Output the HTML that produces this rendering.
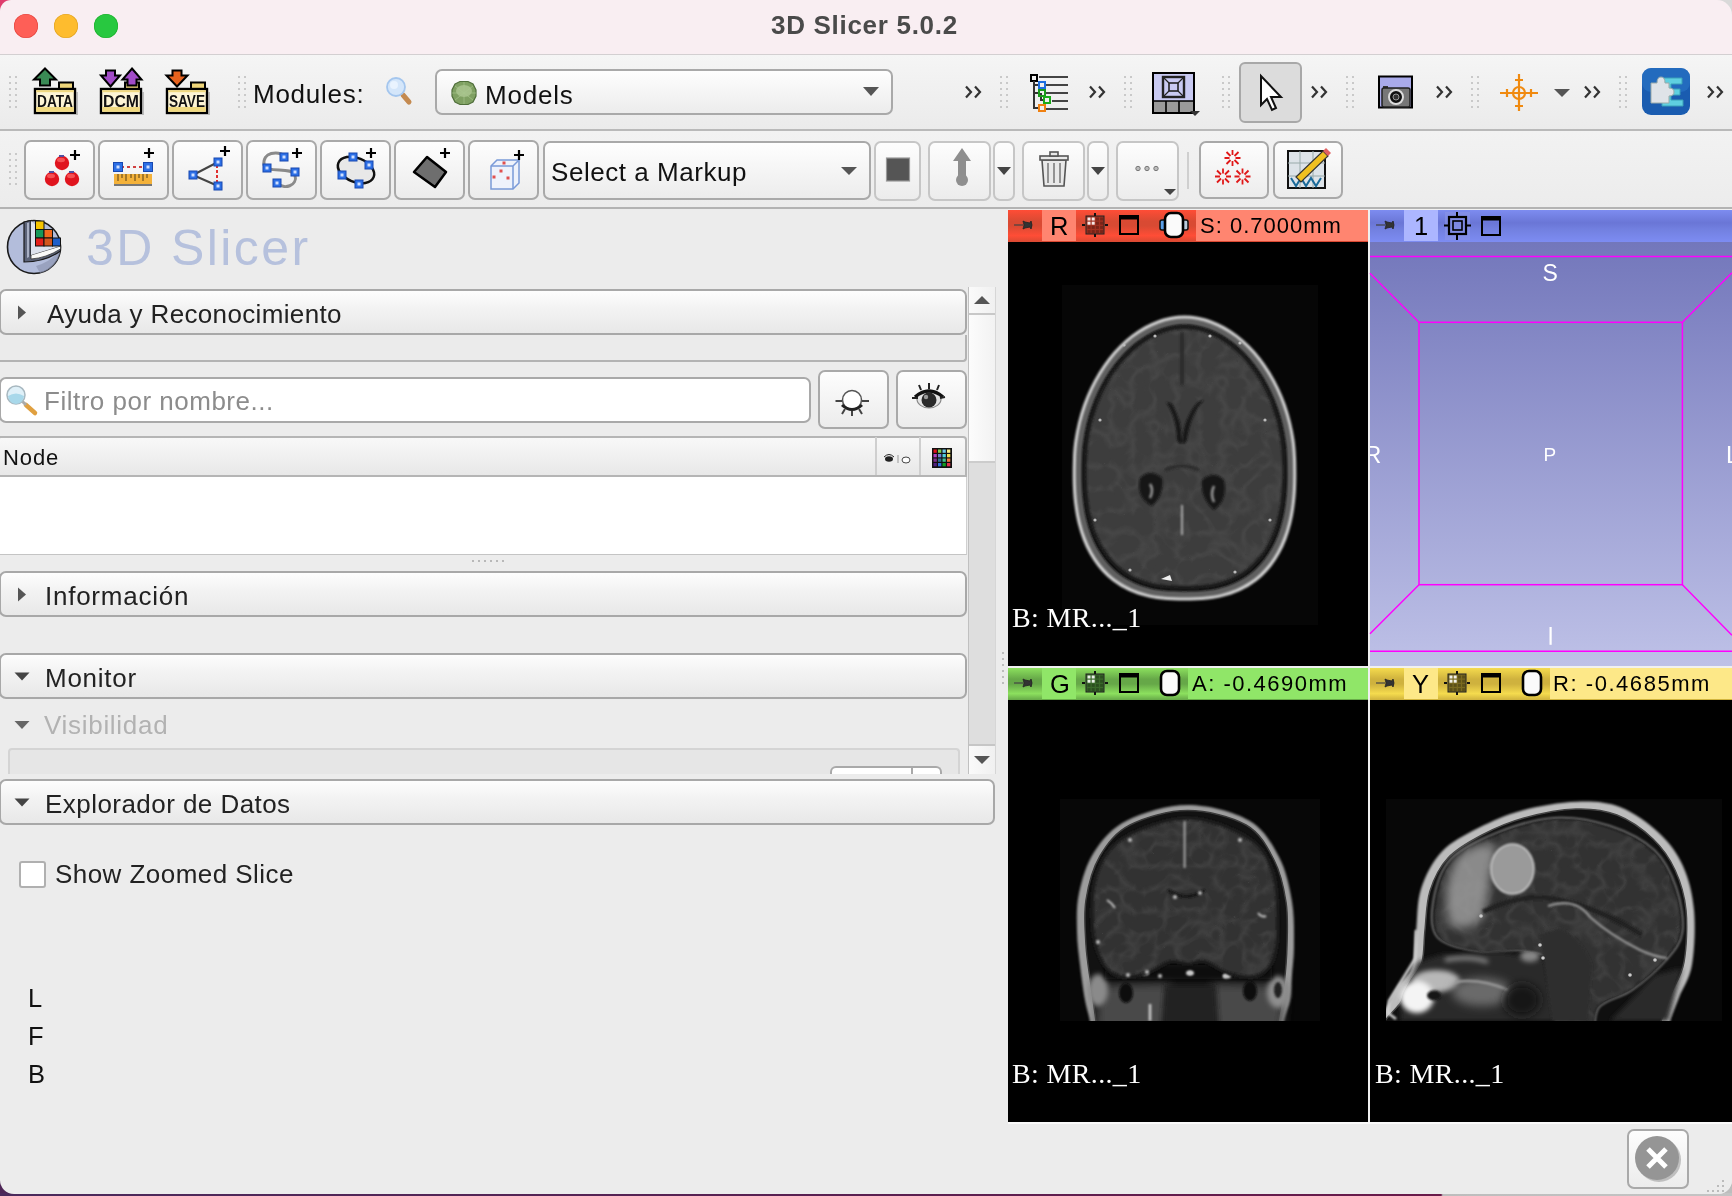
<!DOCTYPE html><html><head><meta charset="utf-8"><style>
*{margin:0;padding:0;box-sizing:border-box}
html,body{width:1732px;height:1196px;overflow:hidden;background:#5b1d48}
body{font-family:"Liberation Sans",sans-serif;position:relative}
.a{position:absolute}
.tx{position:absolute;line-height:1;white-space:nowrap;will-change:transform}

</style></head><body>
<div class="a" style="left:0;top:0;width:1732px;height:1196px;background:#4d2656"></div>
<div class="a" style="left:1442px;top:1100px;width:290px;height:96px;background:#bdbdbd"></div>
<div class="a" style="left:0;top:1193px;width:1732px;height:3px;background:linear-gradient(90deg,#4a2a5c 0%,#5a1f50 50%,#6a1a4a 83.2%,#bdbdbd 83.3%,#c4c4c4 100%)"></div>
<div id="win" class="a" style="left:0;top:0;width:1732px;height:1194px;background:#ececec;border-radius:12px 12px 14px 14px;overflow:hidden"></div>
<div class="a" style="left:1712px;top:0;width:20px;height:20px;background:#d9d9d9"></div>
<div class="a" style="left:0;top:0;width:20px;height:20px;background:#df3d6d"></div>
<div class="a" style="left:0;top:0;width:1732px;height:55px;background:#f9eef2;border-radius:11px 15px 0 0;border-bottom:1px solid #d3cfd1"></div>
<div class="a" style="left:14px;top:14px;width:24px;height:24px;border-radius:50%;background:#fe5f57;box-shadow:inset 0 0 0 0.6px #e0443e"></div>
<div class="a" style="left:54px;top:14px;width:24px;height:24px;border-radius:50%;background:#febc2e;box-shadow:inset 0 0 0 0.6px #dea123"></div>
<div class="a" style="left:94px;top:14px;width:24px;height:24px;border-radius:50%;background:#28c840;box-shadow:inset 0 0 0 0.6px #1dad2b"></div>
<div class="tx" style="left:771.0px;top:12.0px;font-size:26px;color:#4a4a4a;font-weight:700;letter-spacing:0.7px;font-family:'Liberation Sans';">3D Slicer 5.0.2</div>
<div class="a" style="left:0px;top:55px;width:1732px;height:74px;background:linear-gradient(#f5f5f5,#ebebeb)"></div>
<div class="a" style="left:0px;top:129px;width:1732px;height:2px;background:#b9b9b9"></div>
<div class="a" style="left:0px;top:131px;width:1732px;height:76px;background:linear-gradient(#f2f2f2,#ececec)"></div>
<div class="a" style="left:0px;top:207px;width:1732px;height:2px;background:#b3b3b3"></div>
<div class="tx" style="left:252.5px;top:80.6px;font-size:26px;color:#111;font-weight:400;letter-spacing:0.75px;font-family:'Liberation Sans';">Modules:</div>
<div class="a" style="left:435px;top:69px;width:458px;height:46px;border:2px solid #a9a9a9;border-radius:7px;background:linear-gradient(#fefefe,#ececec)"></div>
<div class="tx" style="left:485.0px;top:82.0px;font-size:26px;color:#111;font-weight:400;letter-spacing:0.8px;font-family:'Liberation Sans';">Models</div>
<div class="a" style="left:1239px;top:62px;width:63px;height:61px;border:2px solid #a8a8a8;border-radius:6px;background:#dcdcdc"></div>
<div class="a" style="left:24px;top:140px;width:71px;height:60px;border:2px solid #a9a9a9;border-radius:7px;background:linear-gradient(#fdfdfd,#ececec)"></div>
<div class="a" style="left:98px;top:140px;width:71px;height:60px;border:2px solid #a9a9a9;border-radius:7px;background:linear-gradient(#fdfdfd,#ececec)"></div>
<div class="a" style="left:172px;top:140px;width:71px;height:60px;border:2px solid #a9a9a9;border-radius:7px;background:linear-gradient(#fdfdfd,#ececec)"></div>
<div class="a" style="left:246px;top:140px;width:71px;height:60px;border:2px solid #a9a9a9;border-radius:7px;background:linear-gradient(#fdfdfd,#ececec)"></div>
<div class="a" style="left:320px;top:140px;width:71px;height:60px;border:2px solid #a9a9a9;border-radius:7px;background:linear-gradient(#fdfdfd,#ececec)"></div>
<div class="a" style="left:394px;top:140px;width:71px;height:60px;border:2px solid #a9a9a9;border-radius:7px;background:linear-gradient(#fdfdfd,#ececec)"></div>
<div class="a" style="left:468px;top:140px;width:71px;height:60px;border:2px solid #a9a9a9;border-radius:7px;background:linear-gradient(#fdfdfd,#ececec)"></div>
<div class="a" style="left:543px;top:141px;width:328px;height:59px;border:2px solid #a9a9a9;border-radius:7px;background:linear-gradient(#fefefe,#ececec)"></div>
<div class="tx" style="left:551.0px;top:159.3px;font-size:26px;color:#111;font-weight:400;letter-spacing:0.55px;font-family:'Liberation Sans';">Select a Markup</div>
<div class="a" style="left:874px;top:141px;width:47px;height:60px;border:2px solid #c6c6c6;border-radius:7px;background:linear-gradient(#fdfdfd,#ececec)"></div>
<div class="a" style="left:928px;top:141px;width:63px;height:60px;border:2px solid #c6c6c6;border-radius:7px;background:linear-gradient(#fdfdfd,#ececec)"></div>
<div class="a" style="left:993px;top:141px;width:22px;height:60px;border:2px solid #c6c6c6;border-radius:7px;background:linear-gradient(#fdfdfd,#ececec)"></div>
<div class="a" style="left:1022px;top:141px;width:63px;height:60px;border:2px solid #c6c6c6;border-radius:7px;background:linear-gradient(#fdfdfd,#ececec)"></div>
<div class="a" style="left:1087px;top:141px;width:22px;height:60px;border:2px solid #c6c6c6;border-radius:7px;background:linear-gradient(#fdfdfd,#ececec)"></div>
<div class="a" style="left:1116px;top:141px;width:63px;height:60px;border:2px solid #c6c6c6;border-radius:7px;background:linear-gradient(#fdfdfd,#ececec)"></div>
<div class="a" style="left:1187px;top:152px;width:2px;height:37px;background:#cfcfcf"></div>
<div class="a" style="left:1199px;top:141px;width:70px;height:58px;border:2px solid #a9a9a9;border-radius:7px;background:linear-gradient(#fdfdfd,#ececec)"></div>
<div class="a" style="left:1273px;top:141px;width:70px;height:58px;border:2px solid #a9a9a9;border-radius:7px;background:linear-gradient(#fdfdfd,#ececec)"></div>
<div class="tx" style="left:86.0px;top:222.7px;font-size:50px;color:#b6c1dd;font-weight:400;letter-spacing:2.4px;font-family:'Liberation Sans';">3D Slicer</div>
<div class="a" style="left:-1px;top:289px;width:968px;height:46px;border:2px solid #a8a8a8;border-radius:7px;background:linear-gradient(#fdfdfd,#f3f3f3 40%,#e8e8e8)"></div>
<div class="tx" style="left:46.5px;top:300.5px;font-size:26px;color:#222;font-weight:400;letter-spacing:0.35px;font-family:'Liberation Sans';">Ayuda y Reconocimiento</div>
<div class="a" style="left:-4px;top:335px;width:971px;height:27px;border:2px solid #b3b3b3;border-top:none;border-radius:0 0 4px 4px;background:#ebebeb"></div>
<div class="a" style="left:-1px;top:377px;width:812px;height:46px;border:2px solid #a9a9a9;border-radius:7px;background:#fff"></div>
<div class="tx" style="left:44.0px;top:388.0px;font-size:26px;color:#8c8c8c;font-weight:400;letter-spacing:0.5px;font-family:'Liberation Sans';">Filtro por nombre...</div>
<div class="a" style="left:818px;top:370px;width:71px;height:59px;border:2px solid #a9a9a9;border-radius:7px;background:linear-gradient(#fdfdfd,#ececec)"></div>
<div class="a" style="left:896px;top:370px;width:71px;height:59px;border:2px solid #a9a9a9;border-radius:7px;background:linear-gradient(#fdfdfd,#ececec)"></div>
<div class="a" style="left:-3px;top:436px;width:970px;height:41px;border:2px solid #b5b5b5;border-radius:4px 4px 0 0;background:linear-gradient(#f8f8f8,#e8e8e8)"></div>
<div class="a" style="left:875px;top:437px;width:2px;height:38px;background:#cfcfcf"></div>
<div class="a" style="left:919px;top:437px;width:2px;height:38px;background:#cfcfcf"></div>
<div class="tx" style="left:3.2px;top:447.0px;font-size:22px;color:#111;font-weight:400;letter-spacing:0.9px;font-family:'Liberation Sans';">Node</div>
<div class="a" style="left:-2px;top:477px;width:969px;height:78px;background:#fff;border-bottom:1px solid #c4c4c4;border-right:1px solid #d0d0d0"></div>
<div class="a" style="left:-1px;top:571px;width:968px;height:46px;border:2px solid #a8a8a8;border-radius:7px;background:linear-gradient(#fdfdfd,#f3f3f3 40%,#e8e8e8)"></div>
<div class="tx" style="left:44.8px;top:582.5px;font-size:26px;color:#222;font-weight:400;letter-spacing:0.75px;font-family:'Liberation Sans';">Información</div>
<div class="a" style="left:-1px;top:653px;width:968px;height:46px;border:2px solid #a8a8a8;border-radius:7px;background:linear-gradient(#fdfdfd,#f3f3f3 40%,#e8e8e8)"></div>
<div class="tx" style="left:44.8px;top:664.5px;font-size:26px;color:#222;font-weight:400;letter-spacing:0.75px;font-family:'Liberation Sans';">Monitor</div>
<div class="tx" style="left:44.0px;top:712.2px;font-size:26px;color:#b2b2b2;font-weight:400;letter-spacing:0.7px;font-family:'Liberation Sans';">Visibilidad</div>
<div class="a" style="left:8px;top:748px;width:952px;height:26px;border:2px solid #d4d4d4;border-bottom:none;border-radius:4px 4px 0 0;background:#e6e6e6"></div>
<div class="a" style="left:830px;top:766px;width:112px;height:8px;border:2px solid #a9a9a9;border-bottom:none;border-radius:6px 6px 0 0;background:#fff"></div>
<div class="a" style="left:911px;top:767px;width:2px;height:7px;background:#a9a9a9"></div>
<div class="a" style="left:968px;top:287px;width:28px;height:487px;background:#ececec;border-left:1px solid #c0c0c0;border-right:1px solid #d6d6d6"></div>
<div class="a" style="left:969px;top:287px;width:26px;height:27px;background:linear-gradient(90deg,#fafafa,#f0f0f0)"></div>
<div class="a" style="left:969px;top:313px;width:26px;height:2px;background:#c8c8c8"></div>
<div class="a" style="left:969px;top:315px;width:26px;height:147px;background:linear-gradient(90deg,#fcfcfc,#f2f2f2)"></div>
<div class="a" style="left:969px;top:461px;width:26px;height:285px;background:#dedede;border-top:2px solid #cccccc;border-bottom:2px solid #c6c6c6"></div>
<div class="a" style="left:969px;top:746px;width:26px;height:28px;background:linear-gradient(90deg,#fafafa,#f0f0f0)"></div>
<div class="a" style="left:-1px;top:779px;width:996px;height:46px;border:2px solid #a8a8a8;border-radius:7px;background:linear-gradient(#fdfdfd,#f3f3f3 40%,#e8e8e8)"></div>
<div class="tx" style="left:44.8px;top:790.5px;font-size:26px;color:#222;font-weight:400;letter-spacing:0.45px;font-family:'Liberation Sans';">Explorador de Datos</div>
<div class="a" style="left:18.5px;top:860.5px;width:27px;height:27px;border:2px solid #b0b0b0;border-radius:3px;background:#fff"></div>
<div class="tx" style="left:55.2px;top:861.2px;font-size:26px;color:#222;font-weight:400;letter-spacing:0.45px;font-family:'Liberation Sans';">Show Zoomed Slice</div>
<div class="tx" style="left:28.0px;top:986.4px;font-size:25.5px;color:#111;font-weight:400;letter-spacing:0px;font-family:'Liberation Sans';">L</div>
<div class="tx" style="left:28.0px;top:1023.9px;font-size:25.5px;color:#111;font-weight:400;letter-spacing:0px;font-family:'Liberation Sans';">F</div>
<div class="tx" style="left:28.0px;top:1062.0px;font-size:25.5px;color:#111;font-weight:400;letter-spacing:0px;font-family:'Liberation Sans';">B</div>
<div class="a" style="left:996px;top:209px;width:12px;height:985px;background:#ececec"></div>
<div class="a" style="left:1008px;top:209px;width:724px;height:915px;background:#f0f0f0"></div>
<div class="a" style="left:1008px;top:210px;width:360px;height:32px;background:linear-gradient(#ff4d36 0%,#d94a33 35%,#d94a33 50%,#ff4d36 80%,#d94a33 100%)"></div>
<div class="a" style="left:1042px;top:210px;width:34px;height:31px;background:#ff8570"></div>
<div class="a" style="left:1196px;top:210px;width:172px;height:31px;background:#ff8570"></div>
<div class="tx" style="left:1050.2px;top:214.4px;font-size:25.5px;color:#000;font-weight:400;letter-spacing:0px;font-family:'Liberation Sans';">R</div>
<div class="tx" style="left:1199.7px;top:214.5px;font-size:22px;color:#000;font-weight:400;letter-spacing:1.0px;font-family:'Liberation Sans';">S: 0.7000mm</div>
<div class="a" style="left:1370px;top:210px;width:362px;height:32px;background:linear-gradient(#7d8cf0 0%,#6a76d6 40%,#7280e0 60%,#7d8cf2 100%)"></div>
<div class="a" style="left:1404px;top:210px;width:34px;height:31px;background:#acb6ff"></div>
<div class="a" style="left:1445px;top:212px;width:25px;height:28px;background:#8a94e8;opacity:0.6"></div>
<div class="tx" style="left:1414.0px;top:214.4px;font-size:25.5px;color:#000;font-weight:400;letter-spacing:0px;font-family:'Liberation Sans';">1</div>
<div class="a" style="left:1008px;top:668px;width:360px;height:32px;background:linear-gradient(#8ce05e 0%,#66a848 35%,#66a848 50%,#8ce05e 80%,#66a848 100%)"></div>
<div class="a" style="left:1042px;top:668px;width:34px;height:31px;background:#90e668"></div>
<div class="a" style="left:1188px;top:668px;width:180px;height:31px;background:#90e668"></div>
<div class="tx" style="left:1050.2px;top:672.4px;font-size:25.5px;color:#000;font-weight:400;letter-spacing:0px;font-family:'Liberation Sans';">G</div>
<div class="tx" style="left:1191.8px;top:672.9px;font-size:22px;color:#000;font-weight:400;letter-spacing:1.5px;font-family:'Liberation Sans';">A: -0.4690mm</div>
<div class="a" style="left:1370px;top:668px;width:362px;height:32px;background:linear-gradient(#f5db4e 0%,#cfb23e 35%,#cfb23e 50%,#f5db4e 80%,#cfb23e 100%)"></div>
<div class="a" style="left:1404px;top:668px;width:34px;height:31px;background:#fde888"></div>
<div class="a" style="left:1550px;top:668px;width:182px;height:31px;background:#fde888"></div>
<div class="tx" style="left:1412.2px;top:672.4px;font-size:25.5px;color:#000;font-weight:400;letter-spacing:0px;font-family:'Liberation Sans';">Y</div>
<div class="tx" style="left:1552.5px;top:672.9px;font-size:22px;color:#000;font-weight:400;letter-spacing:1.55px;font-family:'Liberation Sans';">R: -0.4685mm</div>
<div class="a" style="left:1008px;top:242px;width:360px;height:424px;background:#000"></div>
<div class="a" style="left:1008px;top:700px;width:360px;height:422px;background:#000"></div>
<div class="a" style="left:1370px;top:700px;width:362px;height:422px;background:#000"></div>
<div class="a" style="left:1370px;top:242px;width:362px;height:424px;background:linear-gradient(#7377bb,#bec1e7)"></div>
<div class="a" style="left:1008px;top:1122px;width:724px;height:2px;background:#fafafa"></div>
<div class="a" style="left:1008px;top:1124px;width:724px;height:70px;background:#ececec;border-bottom-right-radius:14px"></div>
<div class="a" style="left:1062px;top:285px;width:256px;height:340px;background:#060606"></div>
<div class="a" style="left:1060px;top:799px;width:260px;height:222px;background:#070707"></div>
<div class="a" style="left:1386px;top:799px;width:336px;height:222px;background:#070707"></div>
<div class="a" style="left:1627px;top:1129px;width:62px;height:60px;border:2px solid #a9a9a9;border-radius:7px;background:linear-gradient(#fdfdfd,#ececec)"></div>
<svg class="a" style="left:0;top:0" width="1732" height="1196" viewBox="0 0 1732 1196">
<defs><filter id="b1" filterUnits="userSpaceOnUse" x="0" y="0" width="1732" height="1196"><feGaussianBlur stdDeviation="1"/></filter><filter id="b2" filterUnits="userSpaceOnUse" x="0" y="0" width="1732" height="1196"><feGaussianBlur stdDeviation="2.5"/></filter><filter id="b4" filterUnits="userSpaceOnUse" x="0" y="0" width="1732" height="1196"><feGaussianBlur stdDeviation="5"/></filter><filter id="tex" x="0" y="0" width="100%" height="100%"><feTurbulence type="fractalNoise" baseFrequency="0.07" numOctaves="2" seed="3" result="n"/><feColorMatrix in="n" type="matrix" values="0 0 0 0 0  0 0 0 0 0  0 0 0 0 0  0 0 0 -2.2 1.25" result="a"/><feComposite in="SourceGraphic" in2="a" operator="in"/></filter><filter id="t1" x="0" y="0" width="100%" height="100%"><feTurbulence type="turbulence" baseFrequency="0.045" numOctaves="2" seed="5" result="n"/><feColorMatrix in="n" type="matrix" values="0 0 0 0 0.1  0 0 0 0 0.1  0 0 0 0 0.1  -3 0 0 0 1.1" result="a"/><feComposite in="a" in2="SourceGraphic" operator="in"/></filter></defs>
<path d="M1296.0 458.0 C1296.3 465.6 1296.4 477.9 1296.1 485.9 C1295.8 494.0 1295.3 500.0 1294.4 506.3 C1293.6 512.7 1292.5 518.5 1291.1 524.1 C1289.7 529.7 1288.1 534.9 1286.2 539.8 C1284.3 544.8 1282.1 549.4 1279.6 553.8 C1277.2 558.2 1274.5 562.2 1271.6 566.0 C1268.6 569.8 1265.4 573.2 1262.0 576.4 C1258.5 579.6 1254.8 582.5 1250.8 585.0 C1246.9 587.6 1242.7 589.8 1238.1 591.8 C1233.6 593.7 1228.9 595.3 1223.8 596.6 C1218.6 597.9 1213.8 598.9 1207.2 599.5 C1200.7 600.2 1192.1 600.5 1184.5 600.5 C1176.9 600.5 1168.3 600.2 1161.8 599.5 C1155.2 598.9 1150.4 597.9 1145.2 596.6 C1140.1 595.3 1135.4 593.7 1130.9 591.8 C1126.3 589.8 1122.1 587.6 1118.2 585.0 C1114.2 582.5 1110.5 579.6 1107.0 576.4 C1103.6 573.2 1100.4 569.8 1097.4 566.0 C1094.5 562.2 1091.8 558.2 1089.4 553.8 C1086.9 549.4 1084.7 544.8 1082.8 539.8 C1080.9 534.9 1079.3 529.7 1077.9 524.1 C1076.5 518.5 1075.4 512.7 1074.6 506.3 C1073.7 500.0 1073.2 494.0 1072.9 485.9 C1072.6 477.9 1072.7 465.6 1073.0 458.0 C1073.3 450.4 1073.7 446.3 1074.5 440.3 C1075.4 434.4 1076.5 428.3 1078.0 422.4 C1079.4 416.4 1081.2 410.5 1083.2 404.8 C1085.3 399.1 1087.6 393.4 1090.2 388.0 C1092.8 382.6 1095.6 377.3 1098.7 372.3 C1101.7 367.4 1105.1 362.6 1108.5 358.1 C1112.0 353.7 1115.7 349.5 1119.6 345.6 C1123.4 341.8 1127.5 338.2 1131.6 335.0 C1135.8 331.9 1140.1 329.0 1144.4 326.6 C1148.8 324.2 1153.2 322.1 1157.7 320.5 C1162.2 318.8 1166.8 317.6 1171.2 316.8 C1175.7 315.9 1180.1 315.5 1184.5 315.5 C1188.9 315.5 1193.3 315.9 1197.8 316.8 C1202.2 317.6 1206.8 318.8 1211.3 320.5 C1215.8 322.1 1220.2 324.2 1224.6 326.6 C1228.9 329.0 1233.2 331.9 1237.4 335.0 C1241.5 338.2 1245.6 341.8 1249.4 345.6 C1253.3 349.5 1257.0 353.7 1260.5 358.1 C1263.9 362.6 1267.3 367.4 1270.3 372.3 C1273.4 377.3 1276.2 382.6 1278.8 388.0 C1281.4 393.4 1283.7 399.1 1285.8 404.8 C1287.8 410.5 1289.6 416.4 1291.0 422.4 C1292.5 428.3 1293.6 434.4 1294.5 440.3 C1295.3 446.3 1295.7 450.4 1296.0 458.0 Z" fill="#d4d4d4" filter="url(#b1)"/>
<path d="M1293.0 458.0 C1293.3 465.4 1293.4 477.5 1293.1 485.4 C1292.8 493.2 1292.3 499.1 1291.5 505.3 C1290.7 511.5 1289.6 517.2 1288.2 522.7 C1286.9 528.2 1285.3 533.3 1283.4 538.1 C1281.6 543.0 1279.5 547.5 1277.1 551.8 C1274.7 556.1 1272.1 560.0 1269.2 563.7 C1266.4 567.4 1263.2 570.8 1259.9 573.9 C1256.5 577.0 1252.9 579.8 1249.0 582.3 C1245.2 584.8 1241.1 587.0 1236.7 588.9 C1232.3 590.8 1227.7 592.4 1222.7 593.7 C1217.7 595.0 1213.0 595.9 1206.6 596.5 C1200.3 597.2 1191.9 597.5 1184.5 597.5 C1177.1 597.5 1168.7 597.2 1162.4 596.5 C1156.0 595.9 1151.3 595.0 1146.3 593.7 C1141.3 592.4 1136.7 590.8 1132.3 588.9 C1127.9 587.0 1123.8 584.8 1120.0 582.3 C1116.1 579.8 1112.5 577.0 1109.1 573.9 C1105.8 570.8 1102.6 567.4 1099.8 563.7 C1096.9 560.0 1094.3 556.1 1091.9 551.8 C1089.5 547.5 1087.4 543.0 1085.6 538.1 C1083.7 533.3 1082.1 528.2 1080.8 522.7 C1079.4 517.2 1078.3 511.5 1077.5 505.3 C1076.7 499.1 1076.2 493.2 1075.9 485.4 C1075.6 477.5 1075.7 465.4 1076.0 458.0 C1076.3 450.6 1076.7 446.5 1077.5 440.7 C1078.3 434.9 1079.4 428.9 1080.8 423.1 C1082.2 417.3 1084.0 411.5 1086.0 405.9 C1087.9 400.3 1090.2 394.8 1092.7 389.5 C1095.2 384.2 1098.0 379.0 1101.0 374.2 C1104.0 369.3 1107.2 364.6 1110.6 360.2 C1114.0 355.9 1117.6 351.7 1121.3 348.0 C1125.1 344.2 1129.0 340.7 1133.0 337.6 C1137.1 334.5 1141.3 331.8 1145.5 329.4 C1149.7 327.0 1154.1 325.0 1158.4 323.4 C1162.8 321.8 1167.2 320.5 1171.6 319.7 C1175.9 318.9 1180.2 318.5 1184.5 318.5 C1188.8 318.5 1193.1 318.9 1197.4 319.7 C1201.8 320.5 1206.2 321.8 1210.6 323.4 C1214.9 325.0 1219.3 327.0 1223.5 329.4 C1227.7 331.8 1231.9 334.5 1236.0 337.6 C1240.0 340.7 1243.9 344.2 1247.7 348.0 C1251.4 351.7 1255.0 355.9 1258.4 360.2 C1261.8 364.6 1265.0 369.3 1268.0 374.2 C1271.0 379.0 1273.8 384.2 1276.3 389.5 C1278.8 394.8 1281.1 400.3 1283.0 405.9 C1285.0 411.5 1286.8 417.3 1288.2 423.1 C1289.6 428.9 1290.7 434.9 1291.5 440.7 C1292.3 446.5 1292.7 450.6 1293.0 458.0 Z" fill="#5e5e5e" filter="url(#b1)"/>
<path d="M1287.0 458.0 C1287.2 465.1 1287.3 476.6 1287.1 484.2 C1286.9 491.7 1286.3 497.3 1285.5 503.3 C1284.8 509.2 1283.8 514.7 1282.5 519.9 C1281.2 525.1 1279.7 530.0 1278.0 534.7 C1276.2 539.3 1274.2 543.7 1272.0 547.8 C1269.7 551.8 1267.2 555.6 1264.5 559.2 C1261.8 562.7 1258.9 566.0 1255.7 568.9 C1252.5 571.9 1249.1 574.6 1245.5 577.0 C1241.8 579.4 1238.0 581.5 1233.8 583.3 C1229.7 585.1 1225.4 586.6 1220.6 587.8 C1215.9 589.1 1211.4 590.0 1205.4 590.6 C1199.4 591.2 1191.5 591.5 1184.5 591.5 C1177.5 591.5 1169.6 591.2 1163.6 590.6 C1157.6 590.0 1153.1 589.1 1148.4 587.8 C1143.6 586.6 1139.3 585.1 1135.2 583.3 C1131.0 581.5 1127.2 579.4 1123.5 577.0 C1119.9 574.6 1116.5 571.9 1113.3 568.9 C1110.1 566.0 1107.2 562.7 1104.5 559.2 C1101.8 555.6 1099.3 551.8 1097.0 547.8 C1094.8 543.7 1092.8 539.3 1091.0 534.7 C1089.3 530.0 1087.8 525.1 1086.5 519.9 C1085.2 514.7 1084.2 509.2 1083.5 503.3 C1082.7 497.3 1082.1 491.7 1081.9 484.2 C1081.7 476.6 1081.8 465.1 1082.0 458.0 C1082.2 450.9 1082.6 447.0 1083.4 441.5 C1084.2 435.9 1085.2 430.2 1086.6 424.6 C1087.9 419.1 1089.5 413.5 1091.4 408.2 C1093.3 402.8 1095.4 397.5 1097.8 392.4 C1100.2 387.4 1102.8 382.4 1105.6 377.8 C1108.4 373.1 1111.5 368.6 1114.7 364.4 C1117.9 360.3 1121.3 356.3 1124.8 352.7 C1128.4 349.1 1132.1 345.8 1135.9 342.8 C1139.7 339.8 1143.6 337.2 1147.6 334.9 C1151.6 332.6 1155.8 330.7 1159.9 329.2 C1164.0 327.6 1168.2 326.4 1172.3 325.7 C1176.4 324.9 1180.4 324.5 1184.5 324.5 C1188.6 324.5 1192.6 324.9 1196.7 325.7 C1200.8 326.4 1205.0 327.6 1209.1 329.2 C1213.2 330.7 1217.4 332.6 1221.4 334.9 C1225.4 337.2 1229.3 339.8 1233.1 342.8 C1236.9 345.8 1240.6 349.1 1244.2 352.7 C1247.7 356.3 1251.1 360.3 1254.3 364.4 C1257.5 368.6 1260.6 373.1 1263.4 377.8 C1266.2 382.4 1268.8 387.4 1271.2 392.4 C1273.6 397.5 1275.7 402.8 1277.6 408.2 C1279.5 413.5 1281.1 419.1 1282.4 424.6 C1283.8 430.2 1284.8 435.9 1285.6 441.5 C1286.4 447.0 1286.8 450.9 1287.0 458.0 Z" fill="#111" filter="url(#b1)"/>
<clipPath id="clipax"><path d="M1283.5 457.5 C1283.7 464.4 1283.8 475.6 1283.6 483.0 C1283.4 490.3 1282.8 495.8 1282.1 501.6 C1281.4 507.4 1280.4 512.7 1279.1 517.8 C1277.9 522.9 1276.5 527.6 1274.8 532.2 C1273.1 536.7 1271.1 540.9 1269.0 544.9 C1266.8 548.9 1264.4 552.6 1261.8 556.0 C1259.2 559.5 1256.3 562.6 1253.3 565.5 C1250.2 568.4 1246.9 571.0 1243.4 573.4 C1239.9 575.7 1236.1 577.8 1232.1 579.5 C1228.1 581.3 1224.0 582.8 1219.4 583.9 C1214.8 585.1 1210.5 586.0 1204.7 586.6 C1198.9 587.2 1191.2 587.5 1184.5 587.5 C1177.8 587.5 1170.1 587.2 1164.3 586.6 C1158.5 586.0 1154.2 585.1 1149.6 583.9 C1145.0 582.8 1140.9 581.3 1136.9 579.5 C1132.9 577.8 1129.1 575.7 1125.6 573.4 C1122.1 571.0 1118.8 568.4 1115.7 565.5 C1112.7 562.6 1109.8 559.5 1107.2 556.0 C1104.6 552.6 1102.2 548.9 1100.0 544.9 C1097.9 540.9 1095.9 536.7 1094.2 532.2 C1092.5 527.6 1091.1 522.9 1089.9 517.8 C1088.6 512.7 1087.6 507.4 1086.9 501.6 C1086.2 495.8 1085.6 490.3 1085.4 483.0 C1085.2 475.6 1085.3 464.4 1085.5 457.5 C1085.7 450.6 1086.1 446.8 1086.9 441.4 C1087.6 436.0 1088.6 430.4 1089.9 425.0 C1091.2 419.6 1092.8 414.2 1094.6 409.0 C1096.4 403.7 1098.5 398.6 1100.8 393.6 C1103.0 388.7 1105.6 383.9 1108.3 379.4 C1111.0 374.8 1114.0 370.5 1117.1 366.4 C1120.2 362.3 1123.5 358.5 1126.9 355.0 C1130.3 351.5 1133.9 348.2 1137.6 345.3 C1141.2 342.4 1145.0 339.9 1148.9 337.6 C1152.8 335.4 1156.7 333.5 1160.7 332.0 C1164.7 330.5 1168.8 329.4 1172.7 328.6 C1176.7 327.9 1180.6 327.5 1184.5 327.5 C1188.4 327.5 1192.3 327.9 1196.3 328.6 C1200.2 329.4 1204.3 330.5 1208.3 332.0 C1212.3 333.5 1216.2 335.4 1220.1 337.6 C1224.0 339.9 1227.8 342.4 1231.4 345.3 C1235.1 348.2 1238.7 351.5 1242.1 355.0 C1245.5 358.5 1248.8 362.3 1251.9 366.4 C1255.0 370.5 1258.0 374.8 1260.7 379.4 C1263.4 383.9 1266.0 388.7 1268.2 393.6 C1270.5 398.6 1272.6 403.7 1274.4 409.0 C1276.2 414.2 1277.8 419.6 1279.1 425.0 C1280.4 430.4 1281.4 436.0 1282.1 441.4 C1282.9 446.8 1283.3 450.6 1283.5 457.5 Z"/></clipPath>
<path d="M1283.5 457.5 C1283.7 464.4 1283.8 475.6 1283.6 483.0 C1283.4 490.3 1282.8 495.8 1282.1 501.6 C1281.4 507.4 1280.4 512.7 1279.1 517.8 C1277.9 522.9 1276.5 527.6 1274.8 532.2 C1273.1 536.7 1271.1 540.9 1269.0 544.9 C1266.8 548.9 1264.4 552.6 1261.8 556.0 C1259.2 559.5 1256.3 562.6 1253.3 565.5 C1250.2 568.4 1246.9 571.0 1243.4 573.4 C1239.9 575.7 1236.1 577.8 1232.1 579.5 C1228.1 581.3 1224.0 582.8 1219.4 583.9 C1214.8 585.1 1210.5 586.0 1204.7 586.6 C1198.9 587.2 1191.2 587.5 1184.5 587.5 C1177.8 587.5 1170.1 587.2 1164.3 586.6 C1158.5 586.0 1154.2 585.1 1149.6 583.9 C1145.0 582.8 1140.9 581.3 1136.9 579.5 C1132.9 577.8 1129.1 575.7 1125.6 573.4 C1122.1 571.0 1118.8 568.4 1115.7 565.5 C1112.7 562.6 1109.8 559.5 1107.2 556.0 C1104.6 552.6 1102.2 548.9 1100.0 544.9 C1097.9 540.9 1095.9 536.7 1094.2 532.2 C1092.5 527.6 1091.1 522.9 1089.9 517.8 C1088.6 512.7 1087.6 507.4 1086.9 501.6 C1086.2 495.8 1085.6 490.3 1085.4 483.0 C1085.2 475.6 1085.3 464.4 1085.5 457.5 C1085.7 450.6 1086.1 446.8 1086.9 441.4 C1087.6 436.0 1088.6 430.4 1089.9 425.0 C1091.2 419.6 1092.8 414.2 1094.6 409.0 C1096.4 403.7 1098.5 398.6 1100.8 393.6 C1103.0 388.7 1105.6 383.9 1108.3 379.4 C1111.0 374.8 1114.0 370.5 1117.1 366.4 C1120.2 362.3 1123.5 358.5 1126.9 355.0 C1130.3 351.5 1133.9 348.2 1137.6 345.3 C1141.2 342.4 1145.0 339.9 1148.9 337.6 C1152.8 335.4 1156.7 333.5 1160.7 332.0 C1164.7 330.5 1168.8 329.4 1172.7 328.6 C1176.7 327.9 1180.6 327.5 1184.5 327.5 C1188.4 327.5 1192.3 327.9 1196.3 328.6 C1200.2 329.4 1204.3 330.5 1208.3 332.0 C1212.3 333.5 1216.2 335.4 1220.1 337.6 C1224.0 339.9 1227.8 342.4 1231.4 345.3 C1235.1 348.2 1238.7 351.5 1242.1 355.0 C1245.5 358.5 1248.8 362.3 1251.9 366.4 C1255.0 370.5 1258.0 374.8 1260.7 379.4 C1263.4 383.9 1266.0 388.7 1268.2 393.6 C1270.5 398.6 1272.6 403.7 1274.4 409.0 C1276.2 414.2 1277.8 419.6 1279.1 425.0 C1280.4 430.4 1281.4 436.0 1282.1 441.4 C1282.9 446.8 1283.3 450.6 1283.5 457.5 Z" fill="#3c3c3c" filter="url(#b1)"/>
<g clip-path="url(#clipax)"><rect x="1080" y="320" width="210" height="280" fill="#000" filter="url(#t1)" opacity="0.35"/></g>
<path d="M1283.5 457.5 C1283.7 464.4 1283.8 475.6 1283.6 483.0 C1283.4 490.3 1282.8 495.8 1282.1 501.6 C1281.4 507.4 1280.4 512.7 1279.1 517.8 C1277.9 522.9 1276.5 527.6 1274.8 532.2 C1273.1 536.7 1271.1 540.9 1269.0 544.9 C1266.8 548.9 1264.4 552.6 1261.8 556.0 C1259.2 559.5 1256.3 562.6 1253.3 565.5 C1250.2 568.4 1246.9 571.0 1243.4 573.4 C1239.9 575.7 1236.1 577.8 1232.1 579.5 C1228.1 581.3 1224.0 582.8 1219.4 583.9 C1214.8 585.1 1210.5 586.0 1204.7 586.6 C1198.9 587.2 1191.2 587.5 1184.5 587.5 C1177.8 587.5 1170.1 587.2 1164.3 586.6 C1158.5 586.0 1154.2 585.1 1149.6 583.9 C1145.0 582.8 1140.9 581.3 1136.9 579.5 C1132.9 577.8 1129.1 575.7 1125.6 573.4 C1122.1 571.0 1118.8 568.4 1115.7 565.5 C1112.7 562.6 1109.8 559.5 1107.2 556.0 C1104.6 552.6 1102.2 548.9 1100.0 544.9 C1097.9 540.9 1095.9 536.7 1094.2 532.2 C1092.5 527.6 1091.1 522.9 1089.9 517.8 C1088.6 512.7 1087.6 507.4 1086.9 501.6 C1086.2 495.8 1085.6 490.3 1085.4 483.0 C1085.2 475.6 1085.3 464.4 1085.5 457.5 C1085.7 450.6 1086.1 446.8 1086.9 441.4 C1087.6 436.0 1088.6 430.4 1089.9 425.0 C1091.2 419.6 1092.8 414.2 1094.6 409.0 C1096.4 403.7 1098.5 398.6 1100.8 393.6 C1103.0 388.7 1105.6 383.9 1108.3 379.4 C1111.0 374.8 1114.0 370.5 1117.1 366.4 C1120.2 362.3 1123.5 358.5 1126.9 355.0 C1130.3 351.5 1133.9 348.2 1137.6 345.3 C1141.2 342.4 1145.0 339.9 1148.9 337.6 C1152.8 335.4 1156.7 333.5 1160.7 332.0 C1164.7 330.5 1168.8 329.4 1172.7 328.6 C1176.7 327.9 1180.6 327.5 1184.5 327.5 C1188.4 327.5 1192.3 327.9 1196.3 328.6 C1200.2 329.4 1204.3 330.5 1208.3 332.0 C1212.3 333.5 1216.2 335.4 1220.1 337.6 C1224.0 339.9 1227.8 342.4 1231.4 345.3 C1235.1 348.2 1238.7 351.5 1242.1 355.0 C1245.5 358.5 1248.8 362.3 1251.9 366.4 C1255.0 370.5 1258.0 374.8 1260.7 379.4 C1263.4 383.9 1266.0 388.7 1268.2 393.6 C1270.5 398.6 1272.6 403.7 1274.4 409.0 C1276.2 414.2 1277.8 419.6 1279.1 425.0 C1280.4 430.4 1281.4 436.0 1282.1 441.4 C1282.9 446.8 1283.3 450.6 1283.5 457.5 Z" fill="none" stroke="#1e1e1e" stroke-width="3" filter="url(#b1)"/>
<path d="M1166 402 Q1176 415 1177 440 Q1180 446 1182 442 Q1182 420 1172 404 Z" fill="#141414" filter="url(#b1)"/>
<path d="M1204 400 Q1190 414 1187 440 Q1184 446 1182 442 Q1184 418 1198 402 Z" fill="#141414" filter="url(#b1)"/>
<path d="M1140 478 Q1150 468 1162 478 Q1164 496 1152 506 Q1136 498 1140 478 Z" fill="#141414" filter="url(#b1)"/>
<path d="M1224 480 Q1214 470 1202 480 Q1200 498 1214 510 Q1228 500 1224 480 Z" fill="#141414" filter="url(#b1)"/>
<path d="M1150 484 Q1154 490 1150 498 M1214 486 Q1210 494 1214 502" stroke="#9a9a9a" stroke-width="2.5" fill="none" filter="url(#b1)"/>
<path d="M1165 470 Q1182 462 1199 470" stroke="#2a2a2a" stroke-width="3" fill="none" filter="url(#b1)"/>
<path d="M1182 505 L1182 535" stroke="#aaa" stroke-width="2" filter="url(#b1)"/>
<path d="M1182 332 L1182 385" stroke="#252525" stroke-width="3" filter="url(#b1)"/>
<path d="M1161 579 L1170 575 L1172 581 Z" fill="#eee"/>
<circle cx="1124" cy="345" r="1.6" fill="#bbb"/>
<circle cx="1240" cy="343" r="1.6" fill="#bbb"/>
<circle cx="1100" cy="420" r="1.6" fill="#bbb"/>
<circle cx="1265" cy="420" r="1.6" fill="#bbb"/>
<circle cx="1095" cy="520" r="1.6" fill="#bbb"/>
<circle cx="1270" cy="520" r="1.6" fill="#bbb"/>
<circle cx="1130" cy="570" r="1.6" fill="#bbb"/>
<circle cx="1235" cy="572" r="1.6" fill="#bbb"/>
<circle cx="1155" cy="336" r="1.6" fill="#bbb"/>
<circle cx="1210" cy="336" r="1.6" fill="#bbb"/>
<clipPath id="clipco"><rect x="1060" y="799" width="260" height="222"/></clipPath>
<g clip-path="url(#clipco)">
<path d="M1187.8 805.0 C1208.1 805.0 1233.8 811.8 1249.0 820.5 C1264.2 829.2 1271.8 843.5 1279.0 857.0 C1286.2 870.5 1289.5 887.0 1292.0 901.7 C1294.5 916.4 1294.0 932.8 1294.0 945.0 C1294.0 957.2 1292.7 965.8 1292.0 975.0 C1291.3 984.2 1291.3 992.3 1290.0 1000.0 C1288.7 1007.7 1285.3 1014.3 1284.0 1021.0 C1282.7 1027.7 1314.0 1036.8 1282.0 1040.0 C1250.0 1043.2 1124.0 1043.2 1092.0 1040.0 C1060.0 1036.8 1091.2 1027.7 1090.0 1021.0 C1088.8 1014.3 1086.7 1009.3 1085.0 1000.0 C1083.3 990.7 1081.3 976.3 1080.0 965.0 C1078.7 953.7 1077.2 944.0 1077.0 932.0 C1076.8 920.0 1076.1 906.4 1079.0 893.0 C1081.9 879.6 1086.3 863.8 1094.3 851.7 C1102.3 839.6 1111.4 828.3 1127.0 820.5 C1142.6 812.7 1167.5 805.0 1187.8 805.0 Z" fill="#9c9c9c" filter="url(#b1)"/>
<path d="M1187.8 810.5 C1207.1 810.5 1231.6 816.8 1246.0 825.0 C1260.4 833.2 1267.3 847.2 1274.0 860.0 C1280.7 872.8 1283.8 887.8 1286.0 902.0 C1288.2 916.2 1287.3 931.2 1287.0 945.0 C1286.7 958.8 1285.5 972.3 1284.0 985.0 C1282.5 997.7 1279.3 1011.8 1278.0 1021.0 C1276.7 1030.2 1306.0 1036.8 1276.0 1040.0 C1246.0 1043.2 1128.0 1043.2 1098.0 1040.0 C1068.0 1036.8 1097.2 1030.2 1096.0 1021.0 C1094.8 1011.8 1092.7 997.7 1091.0 985.0 C1089.3 972.3 1086.8 959.2 1086.0 945.0 C1085.2 930.8 1083.7 914.8 1086.0 900.0 C1088.3 885.2 1092.7 868.5 1100.0 856.0 C1107.3 843.5 1115.4 832.6 1130.0 825.0 C1144.6 817.4 1168.5 810.5 1187.8 810.5 Z" fill="#121212" stroke="#3a3a3a" stroke-width="1.5"/>
<path d="M1098 985 L1170 983 L1165 1030 L1096 1030 Z" fill="#484848" filter="url(#b4)"/>
<path d="M1212 983 L1285 985 L1282 1030 L1215 1030 Z" fill="#484848" filter="url(#b4)"/>
<path d="M1165 985 L1215 985 L1218 1030 L1162 1030 Z" fill="#242424" filter="url(#b2)"/>
<ellipse cx="1126" cy="993" rx="7" ry="10" fill="#0c0c0c" filter="url(#b1)"/>
<ellipse cx="1250" cy="991" rx="7" ry="10" fill="#0c0c0c" filter="url(#b1)"/>
<ellipse cx="1098" cy="990" rx="10" ry="16" fill="#8a8a8a" filter="url(#b2)"/>
<ellipse cx="1278" cy="992" rx="11" ry="16" fill="#8e8e8e" filter="url(#b2)"/>
<ellipse cx="1278" cy="990" rx="4" ry="8" fill="#222" filter="url(#b1)"/>
<path d="M1150 1021 L1150 1004" stroke="#d0d0d0" stroke-width="2.5" filter="url(#b1)"/>
<path d="M1105 972 L1272 972" stroke="#0e0e0e" stroke-width="14" filter="url(#b2)"/>
<ellipse cx="1145" cy="973" rx="4" ry="2.5" fill="#d0d0d0" filter="url(#b1)"/>
<ellipse cx="1190" cy="973" rx="4" ry="2.5" fill="#d0d0d0" filter="url(#b1)"/>
<ellipse cx="1227" cy="976" rx="4" ry="2.5" fill="#d0d0d0" filter="url(#b1)"/>
<ellipse cx="1123" cy="970" rx="4" ry="2.5" fill="#d0d0d0" filter="url(#b1)"/>
<ellipse cx="1240" cy="972" rx="4" ry="2.5" fill="#d0d0d0" filter="url(#b1)"/>
<path d="M1187.8 818.0 C1208.8 818.0 1234.6 829.2 1248.7 838.0 C1262.8 846.8 1267.7 857.2 1272.6 871.0 C1277.5 884.8 1277.8 906.5 1278.0 921.0 C1278.2 935.5 1277.3 948.8 1274.0 958.0 C1270.7 967.2 1265.3 973.3 1258.0 976.0 C1250.7 978.7 1238.8 976.3 1230.0 974.0 C1221.2 971.7 1212.0 963.7 1205.0 962.0 C1198.0 960.3 1193.6 964.0 1187.8 964.0 C1182.0 964.0 1177.1 960.3 1170.0 962.0 C1162.9 963.7 1153.8 971.7 1145.0 974.0 C1136.2 976.3 1124.5 978.7 1117.0 976.0 C1109.5 973.3 1104.2 967.2 1100.0 958.0 C1095.8 948.8 1092.5 935.2 1092.0 921.0 C1091.5 906.8 1091.8 886.8 1097.0 873.0 C1102.2 859.2 1107.9 847.2 1123.0 838.0 C1138.1 828.8 1166.8 818.0 1187.8 818.0 Z" fill="#323232" filter="url(#b1)"/>
<clipPath id="clipcoin"><path d="M1187.8 818.0 C1208.8 818.0 1234.6 829.2 1248.7 838.0 C1262.8 846.8 1267.7 857.2 1272.6 871.0 C1277.5 884.8 1277.8 906.5 1278.0 921.0 C1278.2 935.5 1277.3 948.8 1274.0 958.0 C1270.7 967.2 1265.3 973.3 1258.0 976.0 C1250.7 978.7 1238.8 976.3 1230.0 974.0 C1221.2 971.7 1212.0 963.7 1205.0 962.0 C1198.0 960.3 1193.6 964.0 1187.8 964.0 C1182.0 964.0 1177.1 960.3 1170.0 962.0 C1162.9 963.7 1153.8 971.7 1145.0 974.0 C1136.2 976.3 1124.5 978.7 1117.0 976.0 C1109.5 973.3 1104.2 967.2 1100.0 958.0 C1095.8 948.8 1092.5 935.2 1092.0 921.0 C1091.5 906.8 1091.8 886.8 1097.0 873.0 C1102.2 859.2 1107.9 847.2 1123.0 838.0 C1138.1 828.8 1166.8 818.0 1187.8 818.0 Z"/></clipPath>
<g clip-path="url(#clipcoin)"><rect x="1085" y="815" width="200" height="165" fill="#000" filter="url(#t1)" opacity="0.35"/></g>
<path d="M1187.8 818.0 C1208.8 818.0 1234.6 829.2 1248.7 838.0 C1262.8 846.8 1267.7 857.2 1272.6 871.0 C1277.5 884.8 1277.8 906.5 1278.0 921.0 C1278.2 935.5 1277.3 948.8 1274.0 958.0 C1270.7 967.2 1265.3 973.3 1258.0 976.0 C1250.7 978.7 1238.8 976.3 1230.0 974.0 C1221.2 971.7 1212.0 963.7 1205.0 962.0 C1198.0 960.3 1193.6 964.0 1187.8 964.0 C1182.0 964.0 1177.1 960.3 1170.0 962.0 C1162.9 963.7 1153.8 971.7 1145.0 974.0 C1136.2 976.3 1124.5 978.7 1117.0 976.0 C1109.5 973.3 1104.2 967.2 1100.0 958.0 C1095.8 948.8 1092.5 935.2 1092.0 921.0 C1091.5 906.8 1091.8 886.8 1097.0 873.0 C1102.2 859.2 1107.9 847.2 1123.0 838.0 C1138.1 828.8 1166.8 818.0 1187.8 818.0 Z" fill="none" stroke="#1a1a1a" stroke-width="3" filter="url(#b1)"/>
<path d="M1184.6 821 L1184.6 868" stroke="#a8a8a8" stroke-width="2" filter="url(#b1)"/>
<path d="M1168 890 Q1186 903 1205 890" stroke="#151515" stroke-width="3" fill="none" filter="url(#b1)"/>
<path d="M1107 900 Q1112 903 1115 908 M1258 913 Q1262 918 1266 916" stroke="#c8c8c8" stroke-width="2" fill="none" filter="url(#b1)"/>
<circle cx="1147" cy="972" r="2" fill="#c8c8c8" filter="url(#b1)"/>
<circle cx="1190" cy="973" r="2" fill="#c8c8c8" filter="url(#b1)"/>
<circle cx="1225" cy="976" r="2" fill="#c8c8c8" filter="url(#b1)"/>
<circle cx="1098" cy="942" r="2" fill="#c8c8c8" filter="url(#b1)"/>
<circle cx="1175" cy="897" r="2" fill="#c8c8c8" filter="url(#b1)"/>
<circle cx="1200" cy="893" r="2" fill="#c8c8c8" filter="url(#b1)"/>
<circle cx="1130" cy="840" r="2" fill="#c8c8c8" filter="url(#b1)"/>
<circle cx="1240" cy="840" r="2" fill="#c8c8c8" filter="url(#b1)"/>
<circle cx="1128" cy="975" r="2" fill="#c8c8c8" filter="url(#b1)"/>
<circle cx="1160" cy="976" r="2" fill="#c8c8c8" filter="url(#b1)"/>
</g>
<clipPath id="clipsg"><rect x="1386" y="799" width="336" height="222"/></clipPath>
<g clip-path="url(#clipsg)">
<path d="M1388.0 1004.0 C1390.7 998.7 1394.0 992.2 1398.0 986.0 C1402.0 979.8 1409.0 976.0 1412.0 967.0 C1415.0 958.0 1414.5 945.0 1416.0 932.0 C1417.5 919.0 1416.7 902.4 1421.0 889.0 C1425.3 875.6 1432.1 861.9 1441.7 851.7 C1451.3 841.5 1465.3 834.7 1478.7 827.8 C1492.1 820.9 1505.7 814.8 1522.0 810.4 C1538.3 806.0 1560.2 802.3 1576.5 801.7 C1592.8 801.1 1606.2 801.8 1620.0 807.0 C1633.8 812.2 1648.5 823.2 1659.0 833.0 C1669.5 842.8 1677.2 853.2 1683.0 866.0 C1688.8 878.8 1692.5 893.5 1694.0 910.0 C1695.5 926.5 1694.5 950.2 1692.0 964.8 C1689.5 979.4 1682.7 988.0 1679.0 997.4 C1675.3 1006.8 1672.3 1013.9 1670.0 1021.0 C1667.7 1028.1 1713.3 1036.8 1665.0 1040.0 C1616.7 1043.2 1427.2 1043.7 1380.0 1040.0 C1332.8 1036.3 1380.7 1024.0 1382.0 1018.0 C1383.3 1012.0 1385.3 1009.3 1388.0 1004.0 Z" fill="#bcbcbc" filter="url(#b1)"/>
<path d="M1402.0 1000.0 C1403.7 990.3 1406.7 988.3 1410.0 982.0 C1413.3 975.7 1419.5 970.7 1422.0 962.0 C1424.5 953.3 1423.7 941.8 1425.0 930.0 C1426.3 918.2 1426.2 903.0 1430.0 891.0 C1433.8 879.0 1439.3 867.3 1448.0 858.0 C1456.7 848.7 1469.3 841.7 1482.0 835.0 C1494.7 828.3 1508.3 822.3 1524.0 818.0 C1539.7 813.7 1560.5 809.5 1576.0 809.0 C1591.5 808.5 1604.2 810.0 1617.0 815.0 C1629.8 820.0 1643.3 829.8 1653.0 839.0 C1662.7 848.2 1669.5 858.2 1675.0 870.0 C1680.5 881.8 1684.5 894.7 1686.0 910.0 C1687.5 925.3 1686.5 948.0 1684.0 962.0 C1681.5 976.0 1674.8 984.2 1671.0 994.0 C1667.2 1003.8 1663.7 1013.3 1661.0 1021.0 C1658.3 1028.7 1698.5 1036.8 1655.0 1040.0 C1611.5 1043.2 1442.2 1046.7 1400.0 1040.0 C1357.8 1033.3 1400.3 1009.7 1402.0 1000.0 Z" fill="#101010" stroke="#444" stroke-width="1.5"/>
<path d="M1433.4 901.2 C1435.6 888.2 1439.9 870.6 1450.8 859.1 C1461.6 847.6 1481.4 839.0 1498.7 832.1 C1516.0 825.3 1536.1 818.9 1554.6 817.9 C1573.1 816.8 1593.3 820.6 1609.9 826.0 C1626.5 831.4 1643.3 839.9 1654.4 850.2 C1665.4 860.5 1671.5 874.3 1676.2 887.9 C1680.8 901.6 1684.1 920.0 1682.3 932.1 C1680.5 944.2 1673.8 951.0 1665.5 960.7 C1657.1 970.3 1643.5 982.1 1632.3 989.9 C1621.2 997.8 1605.6 998.9 1598.7 1007.6 C1591.7 1016.3 1597.0 1036.5 1590.5 1042.3 C1584.0 1048.0 1566.4 1055.0 1559.9 1042.3 C1553.4 1029.5 1557.7 981.1 1551.7 965.8 C1545.8 950.5 1536.4 952.8 1524.2 950.5 C1512.0 948.1 1492.8 953.7 1478.3 951.5 C1463.9 949.3 1445.0 945.6 1437.5 937.2 C1430.0 928.8 1431.2 914.2 1433.4 901.2 Z" fill="none" stroke="#8a8a8a" stroke-width="2" filter="url(#b1)" opacity="0.8"/>
<path d="M1400 1021 L1402 1000 L1418 962 L1440 955 L1500 952 L1545 960 L1556 1021 Z" fill="#2a2a2a" filter="url(#b2)"/>
<path d="M1416 930 L1415 959 L1389 1001 L1388 1013 L1396 1019" stroke="#d8d8d8" stroke-width="2.5" fill="none" filter="url(#b1)"/>
<ellipse cx="1436" cy="981" rx="24" ry="11" fill="#b8b8b8" filter="url(#b2)"/>
<ellipse cx="1417" cy="997" rx="17" ry="16" fill="#f4f4f4" filter="url(#b2)"/>
<ellipse cx="1434" cy="995.5" rx="7" ry="5" fill="#181818" filter="url(#b1)"/>
<ellipse cx="1482" cy="992" rx="30" ry="14" fill="#6a6a6a" filter="url(#b4)"/>
<path d="M1455 982 Q1480 978 1508 990" stroke="#999" stroke-width="2.5" fill="none" filter="url(#b1)"/>
<path d="M1445 960 Q1470 955 1488 962" stroke="#8a8a8a" stroke-width="4" fill="none" filter="url(#b2)"/>
<ellipse cx="1522" cy="1000" rx="18" ry="16" fill="#181818" filter="url(#b4)"/>
<ellipse cx="1530" cy="956" rx="10" ry="6" fill="#888" filter="url(#b2)"/>
<circle cx="1541" cy="946" r="2.5" fill="#ddd" filter="url(#b1)"/>
<path d="M1610 1021 L1655 975 L1682 968 L1668 1021 Z" fill="#2a2a2a" filter="url(#b2)"/>
<path d="M1436.0 901.7 C1438.2 888.9 1442.3 871.7 1453.0 860.4 C1463.7 849.1 1483.0 840.7 1500.0 834.0 C1517.0 827.3 1536.6 821.0 1554.8 820.0 C1573.0 819.0 1592.7 822.7 1609.0 828.0 C1625.3 833.3 1641.8 841.6 1652.6 851.7 C1663.4 861.8 1669.4 875.3 1674.0 888.7 C1678.6 902.1 1681.8 920.1 1680.0 932.0 C1678.2 943.9 1671.7 950.5 1663.5 960.0 C1655.3 969.5 1641.9 981.0 1631.0 988.7 C1620.1 996.4 1604.8 997.5 1598.0 1006.0 C1591.2 1014.5 1596.3 1034.3 1590.0 1040.0 C1583.7 1045.7 1566.3 1052.5 1560.0 1040.0 C1553.7 1027.5 1557.8 980.0 1552.0 965.0 C1546.2 950.0 1537.0 952.3 1525.0 950.0 C1513.0 947.7 1494.2 953.2 1480.0 951.0 C1465.8 948.8 1447.3 945.2 1440.0 937.0 C1432.7 928.8 1433.8 914.5 1436.0 901.7 Z" fill="#303030" filter="url(#b1)"/>
<clipPath id="clipsgin"><path d="M1436.0 901.7 C1438.2 888.9 1442.3 871.7 1453.0 860.4 C1463.7 849.1 1483.0 840.7 1500.0 834.0 C1517.0 827.3 1536.6 821.0 1554.8 820.0 C1573.0 819.0 1592.7 822.7 1609.0 828.0 C1625.3 833.3 1641.8 841.6 1652.6 851.7 C1663.4 861.8 1669.4 875.3 1674.0 888.7 C1678.6 902.1 1681.8 920.1 1680.0 932.0 C1678.2 943.9 1671.7 950.5 1663.5 960.0 C1655.3 969.5 1641.9 981.0 1631.0 988.7 C1620.1 996.4 1604.8 997.5 1598.0 1006.0 C1591.2 1014.5 1596.3 1034.3 1590.0 1040.0 C1583.7 1045.7 1566.3 1052.5 1560.0 1040.0 C1553.7 1027.5 1557.8 980.0 1552.0 965.0 C1546.2 950.0 1537.0 952.3 1525.0 950.0 C1513.0 947.7 1494.2 953.2 1480.0 951.0 C1465.8 948.8 1447.3 945.2 1440.0 937.0 C1432.7 928.8 1433.8 914.5 1436.0 901.7 Z"/></clipPath>
<g clip-path="url(#clipsgin)"><rect x="1430" y="815" width="260" height="225" fill="#000" filter="url(#t1)" opacity="0.35"/></g>
<path d="M1455 860 Q1475 840 1495 845 Q1490 880 1485 915 Q1470 935 1450 925 Q1440 895 1455 860 Z" fill="#a8a8a8" opacity="0.75" filter="url(#b4)"/>
<path d="M1483 912 Q1520 893 1555 899 Q1600 908 1642 935" stroke="#222" stroke-width="5" fill="none" filter="url(#b1)"/>
<path d="M1548 906 Q1575 897 1590 917 Q1610 935 1640 950 Q1655 957 1667 958" stroke="#9a9a9a" stroke-width="2.2" fill="none" filter="url(#b1)"/>
<path d="M1540 935 L1552 1021 L1588 1021 L1592 965 Q1582 938 1560 928 Z" fill="#2e2e2e" filter="url(#b1)"/>
<ellipse cx="1512.4" cy="869" rx="21.5" ry="25" fill="#9a9a9a" stroke="#cdcdcd" stroke-width="1.5" filter="url(#b1)"/>
<circle cx="1481" cy="916" r="1.8" fill="#ccc"/>
<circle cx="1540" cy="945" r="1.8" fill="#ccc"/>
<circle cx="1543" cy="958" r="1.8" fill="#ccc"/>
<circle cx="1630" cy="975" r="1.8" fill="#ccc"/>
<circle cx="1655" cy="960" r="1.8" fill="#ccc"/>
</g>
<g stroke="#ff00ff" stroke-width="1.5" fill="none"><path d="M1370 256.5 L1732 256.5 M1370 651.3 L1732 651.3"/><rect x="1419" y="322.3" width="263.4" height="262.4"/><path d="M1419 322.3 L1370 273.3 M1682.4 322.3 L1732 272.7 M1419 584.7 L1370 633.7 M1682.4 584.7 L1732 635.3"/></g>
<clipPath id="clip3d"><rect x="1370" y="242" width="362" height="424"/></clipPath>
<g fill="#fff" font-family="Liberation Sans" clip-path="url(#clip3d)"><text x="1542.5" y="280.6" font-size="23">S</text><text x="1543.5" y="460.7" font-size="19">P</text><text x="1364" y="463.3" font-size="24">R</text><text x="1726" y="463.3" font-size="24">L</text><rect x="1549.5" y="627" width="2.2" height="17.8"/></g>
</svg>
<div class="tx" style="left:1012.0px;top:603.8px;font-size:28px;color:#fff;letter-spacing:0.35px;font-family:'Liberation Serif'">B: MR..._1</div>
<div class="tx" style="left:1012.0px;top:1059.8px;font-size:28px;color:#fff;letter-spacing:0.35px;font-family:'Liberation Serif'">B: MR..._1</div>
<div class="tx" style="left:1375.0px;top:1059.8px;font-size:28px;color:#fff;letter-spacing:0.35px;font-family:'Liberation Serif'">B: MR..._1</div>
<svg class="a" style="left:0;top:0" width="1732" height="1196" viewBox="0 0 1732 1196">
<rect x="9" y="76" width="2" height="2" fill="#c9c9c9"/>
<rect x="15" y="76" width="2" height="2" fill="#c9c9c9"/>
<rect x="9" y="82" width="2" height="2" fill="#c9c9c9"/>
<rect x="15" y="82" width="2" height="2" fill="#c9c9c9"/>
<rect x="9" y="88" width="2" height="2" fill="#c9c9c9"/>
<rect x="15" y="88" width="2" height="2" fill="#c9c9c9"/>
<rect x="9" y="94" width="2" height="2" fill="#c9c9c9"/>
<rect x="15" y="94" width="2" height="2" fill="#c9c9c9"/>
<rect x="9" y="100" width="2" height="2" fill="#c9c9c9"/>
<rect x="15" y="100" width="2" height="2" fill="#c9c9c9"/>
<rect x="9" y="106" width="2" height="2" fill="#c9c9c9"/>
<rect x="15" y="106" width="2" height="2" fill="#c9c9c9"/>
<rect x="59" y="82.5" width="14" height="7" fill="#efd67a" stroke="#000" stroke-width="2"/>
<rect x="35" y="89" width="40" height="24" fill="#fdf5d6" stroke="#000" stroke-width="2.4"/>
<rect x="36.2" y="107" width="37.6" height="4.8" fill="#f0d980"/>
<rect x="36.2" y="90.2" width="37.6" height="2" fill="#f0d980"/>
<rect x="76" y="92" width="2" height="23" fill="#9a9a9a" opacity="0.6"/>
<text x="37" y="107" font-family="Liberation Sans" font-weight="bold" font-size="17" textLength="36" lengthAdjust="spacingAndGlyphs" fill="#111">DATA</text>
<path d="M45 68.5 L56.0 79.5 L50.0 79.5 L50.0 85.5 L40.0 85.5 L40.0 79.5 L34.0 79.5 Z" fill="#3a8a55" stroke="#000" stroke-width="2"/>
<rect x="125" y="82.5" width="14" height="7" fill="#efd67a" stroke="#000" stroke-width="2"/>
<rect x="101" y="89" width="40" height="24" fill="#fdf5d6" stroke="#000" stroke-width="2.4"/>
<rect x="102.2" y="107" width="37.6" height="4.8" fill="#f0d980"/>
<rect x="102.2" y="90.2" width="37.6" height="2" fill="#f0d980"/>
<rect x="142" y="92" width="2" height="23" fill="#9a9a9a" opacity="0.6"/>
<text x="103" y="107" font-family="Liberation Sans" font-weight="bold" font-size="17" textLength="36" lengthAdjust="spacingAndGlyphs" fill="#111">DCM</text>
<path d="M110.5 86.5 L120.0 75.5 L115.0 75.5 L115.0 70.5 L106.0 70.5 L106.0 75.5 L101.0 75.5 Z" fill="#a24cc8" stroke="#000" stroke-width="2"/>
<path d="M132 68.5 L141.5 79.5 L136.5 79.5 L136.5 85.5 L127.5 85.5 L127.5 79.5 L122.5 79.5 Z" fill="#a24cc8" stroke="#000" stroke-width="2"/>
<rect x="191" y="82.5" width="14" height="7" fill="#efd67a" stroke="#000" stroke-width="2"/>
<rect x="167" y="89" width="40" height="24" fill="#fdf5d6" stroke="#000" stroke-width="2.4"/>
<rect x="168.2" y="107" width="37.6" height="4.8" fill="#f0d980"/>
<rect x="168.2" y="90.2" width="37.6" height="2" fill="#f0d980"/>
<rect x="208" y="92" width="2" height="23" fill="#9a9a9a" opacity="0.6"/>
<text x="169" y="107" font-family="Liberation Sans" font-weight="bold" font-size="17" textLength="36" lengthAdjust="spacingAndGlyphs" fill="#111">SAVE</text>
<path d="M177 86.5 L187.5 75.5 L181.5 75.5 L181.5 70.5 L172.5 70.5 L172.5 75.5 L166.5 75.5 Z" fill="#e6621e" stroke="#000" stroke-width="2"/>
<rect x="238" y="76" width="2" height="2" fill="#c9c9c9"/>
<rect x="244" y="76" width="2" height="2" fill="#c9c9c9"/>
<rect x="238" y="82" width="2" height="2" fill="#c9c9c9"/>
<rect x="244" y="82" width="2" height="2" fill="#c9c9c9"/>
<rect x="238" y="88" width="2" height="2" fill="#c9c9c9"/>
<rect x="244" y="88" width="2" height="2" fill="#c9c9c9"/>
<rect x="238" y="94" width="2" height="2" fill="#c9c9c9"/>
<rect x="244" y="94" width="2" height="2" fill="#c9c9c9"/>
<rect x="238" y="100" width="2" height="2" fill="#c9c9c9"/>
<rect x="244" y="100" width="2" height="2" fill="#c9c9c9"/>
<rect x="238" y="106" width="2" height="2" fill="#c9c9c9"/>
<rect x="244" y="106" width="2" height="2" fill="#c9c9c9"/>
<path d="M403 95 L409 102" stroke="#c48a50" stroke-width="5" stroke-linecap="round"/>
<circle cx="396" cy="87" r="9" fill="#d4e6fa" stroke="#a4c6ee" stroke-width="1.8"/>
<circle cx="394" cy="85" r="4" fill="#eef6ff" opacity="0.8"/>
<path d="M455 84 L460 81.5 L468 81.5 L473 84 L476 90 L476 96 L473 102 L468 104.5 L460 104.5 L455 102 L452 96 L452 90 Z" fill="#7fa062" stroke="#4f6e3a" stroke-width="1.2"/>
<ellipse cx="464" cy="91" rx="8" ry="6" fill="#b4cc98" opacity="0.7"/>
<path d="M455 86 L473 100 M473 86 L455 100 M464 82 L464 104 M452 93 L476 93" stroke="#a9c890" stroke-width="0.8" opacity="0.8"/>
<path d="M863 87 L879 87 L871.0 96 Z" fill="#555"/>
<path d="M966 86.5 L971 92.0 L966 97.5 M975 86.5 L980 92.0 L975 97.5" stroke="#333" stroke-width="2.2" fill="none"/>
<rect x="1000" y="76" width="2" height="2" fill="#c9c9c9"/>
<rect x="1006" y="76" width="2" height="2" fill="#c9c9c9"/>
<rect x="1000" y="82" width="2" height="2" fill="#c9c9c9"/>
<rect x="1006" y="82" width="2" height="2" fill="#c9c9c9"/>
<rect x="1000" y="88" width="2" height="2" fill="#c9c9c9"/>
<rect x="1006" y="88" width="2" height="2" fill="#c9c9c9"/>
<rect x="1000" y="94" width="2" height="2" fill="#c9c9c9"/>
<rect x="1006" y="94" width="2" height="2" fill="#c9c9c9"/>
<rect x="1000" y="100" width="2" height="2" fill="#c9c9c9"/>
<rect x="1006" y="100" width="2" height="2" fill="#c9c9c9"/>
<rect x="1000" y="106" width="2" height="2" fill="#c9c9c9"/>
<rect x="1006" y="106" width="2" height="2" fill="#c9c9c9"/>
<g fill="none" stroke-width="2"><rect x="1031" y="75" width="6" height="6" stroke="#000"/><path d="M1034 81 L1034 108 L1039 108 M1034 85 L1039 85 M1034 93 L1039 93 M1041 93 L1041 100 L1044 100" stroke="#333"/><rect x="1039" y="82" width="6" height="6" stroke="#1e6fe0"/><rect x="1039" y="90" width="6" height="6" stroke="#1a9a1a"/><rect x="1044" y="97" width="6" height="6" stroke="#1aaa1a"/><rect x="1039" y="105" width="6" height="6" stroke="#f08010"/><path d="M1039 77 L1068 77 M1046 85 L1068 85 M1046 93 L1068 93 M1052 101 L1068 101 M1046 109 L1068 109" stroke="#444"/></g>
<path d="M1090 86.5 L1095 92.0 L1090 97.5 M1099 86.5 L1104 92.0 L1099 97.5" stroke="#333" stroke-width="2.2" fill="none"/>
<rect x="1124" y="76" width="2" height="2" fill="#c9c9c9"/>
<rect x="1130" y="76" width="2" height="2" fill="#c9c9c9"/>
<rect x="1124" y="82" width="2" height="2" fill="#c9c9c9"/>
<rect x="1130" y="82" width="2" height="2" fill="#c9c9c9"/>
<rect x="1124" y="88" width="2" height="2" fill="#c9c9c9"/>
<rect x="1130" y="88" width="2" height="2" fill="#c9c9c9"/>
<rect x="1124" y="94" width="2" height="2" fill="#c9c9c9"/>
<rect x="1130" y="94" width="2" height="2" fill="#c9c9c9"/>
<rect x="1124" y="100" width="2" height="2" fill="#c9c9c9"/>
<rect x="1130" y="100" width="2" height="2" fill="#c9c9c9"/>
<rect x="1124" y="106" width="2" height="2" fill="#c9c9c9"/>
<rect x="1130" y="106" width="2" height="2" fill="#c9c9c9"/>
<rect x="1153" y="73" width="41" height="40" fill="#c9caf2" stroke="#000" stroke-width="2"/>
<rect x="1154" y="101" width="39" height="11" fill="#9a9a9a"/>
<path d="M1154 101 L1193 101 M1166 101 L1166 112 M1179 101 L1179 112" stroke="#000" stroke-width="1.6"/>
<rect x="1163" y="77" width="21" height="20" fill="none" stroke="#222" stroke-width="2.4"/>
<rect x="1169" y="83" width="9" height="8" fill="none" stroke="#222" stroke-width="1.6"/>
<path d="M1163 77 L1169 83 M1184 77 L1178 83 M1163 97 L1169 91 M1184 97 L1178 91" stroke="#222" stroke-width="1.2"/>
<path d="M1190 111 L1200 111 L1195 116 Z" fill="#333"/>
<rect x="1222" y="76" width="2" height="2" fill="#c9c9c9"/>
<rect x="1228" y="76" width="2" height="2" fill="#c9c9c9"/>
<rect x="1222" y="82" width="2" height="2" fill="#c9c9c9"/>
<rect x="1228" y="82" width="2" height="2" fill="#c9c9c9"/>
<rect x="1222" y="88" width="2" height="2" fill="#c9c9c9"/>
<rect x="1228" y="88" width="2" height="2" fill="#c9c9c9"/>
<rect x="1222" y="94" width="2" height="2" fill="#c9c9c9"/>
<rect x="1228" y="94" width="2" height="2" fill="#c9c9c9"/>
<rect x="1222" y="100" width="2" height="2" fill="#c9c9c9"/>
<rect x="1228" y="100" width="2" height="2" fill="#c9c9c9"/>
<rect x="1222" y="106" width="2" height="2" fill="#c9c9c9"/>
<rect x="1228" y="106" width="2" height="2" fill="#c9c9c9"/>
<path d="M1261 76 L1261 105 L1267 99 L1272 110 L1276 108 L1271 97 L1281 97 Z" fill="#fff" stroke="#111" stroke-width="2" stroke-linejoin="miter"/>
<path d="M1312 86.5 L1317 92.0 L1312 97.5 M1321 86.5 L1326 92.0 L1321 97.5" stroke="#333" stroke-width="2.2" fill="none"/>
<rect x="1346" y="76" width="2" height="2" fill="#c9c9c9"/>
<rect x="1352" y="76" width="2" height="2" fill="#c9c9c9"/>
<rect x="1346" y="82" width="2" height="2" fill="#c9c9c9"/>
<rect x="1352" y="82" width="2" height="2" fill="#c9c9c9"/>
<rect x="1346" y="88" width="2" height="2" fill="#c9c9c9"/>
<rect x="1352" y="88" width="2" height="2" fill="#c9c9c9"/>
<rect x="1346" y="94" width="2" height="2" fill="#c9c9c9"/>
<rect x="1352" y="94" width="2" height="2" fill="#c9c9c9"/>
<rect x="1346" y="100" width="2" height="2" fill="#c9c9c9"/>
<rect x="1352" y="100" width="2" height="2" fill="#c9c9c9"/>
<rect x="1346" y="106" width="2" height="2" fill="#c9c9c9"/>
<rect x="1352" y="106" width="2" height="2" fill="#c9c9c9"/>
<rect x="1379" y="76.5" width="33" height="31" fill="#a9aaea" stroke="#000" stroke-width="2"/>
<rect x="1383" y="86" width="5" height="3" fill="#333"/>
<rect x="1382" y="88" width="28" height="19" rx="2" fill="#777" stroke="#222" stroke-width="1.5"/>
<circle cx="1396" cy="97" r="7" fill="#111" stroke="#ddd" stroke-width="2"/>
<circle cx="1396" cy="97" r="3" fill="#333" stroke="#999" stroke-width="1"/>
<path d="M1437 86.5 L1442 92.0 L1437 97.5 M1446 86.5 L1451 92.0 L1446 97.5" stroke="#333" stroke-width="2.2" fill="none"/>
<rect x="1471" y="76" width="2" height="2" fill="#c9c9c9"/>
<rect x="1477" y="76" width="2" height="2" fill="#c9c9c9"/>
<rect x="1471" y="82" width="2" height="2" fill="#c9c9c9"/>
<rect x="1477" y="82" width="2" height="2" fill="#c9c9c9"/>
<rect x="1471" y="88" width="2" height="2" fill="#c9c9c9"/>
<rect x="1477" y="88" width="2" height="2" fill="#c9c9c9"/>
<rect x="1471" y="94" width="2" height="2" fill="#c9c9c9"/>
<rect x="1477" y="94" width="2" height="2" fill="#c9c9c9"/>
<rect x="1471" y="100" width="2" height="2" fill="#c9c9c9"/>
<rect x="1477" y="100" width="2" height="2" fill="#c9c9c9"/>
<rect x="1471" y="106" width="2" height="2" fill="#c9c9c9"/>
<rect x="1477" y="106" width="2" height="2" fill="#c9c9c9"/>
<g stroke="#f08a10" stroke-width="2.2" fill="none"><path d="M1500 93 L1538 93 M1519 74 L1519 111"/><circle cx="1519" cy="93" r="6"/><path d="M1507 89 L1507 97 M1531 89 L1531 97 M1515 80 L1523 80 M1515 106 L1523 106"/></g>
<path d="M1554 89 L1570 89 L1562.0 97 Z" fill="#555"/>
<path d="M1585 86.5 L1590 92.0 L1585 97.5 M1594 86.5 L1599 92.0 L1594 97.5" stroke="#333" stroke-width="2.2" fill="none"/>
<rect x="1619" y="76" width="2" height="2" fill="#c9c9c9"/>
<rect x="1625" y="76" width="2" height="2" fill="#c9c9c9"/>
<rect x="1619" y="82" width="2" height="2" fill="#c9c9c9"/>
<rect x="1625" y="82" width="2" height="2" fill="#c9c9c9"/>
<rect x="1619" y="88" width="2" height="2" fill="#c9c9c9"/>
<rect x="1625" y="88" width="2" height="2" fill="#c9c9c9"/>
<rect x="1619" y="94" width="2" height="2" fill="#c9c9c9"/>
<rect x="1625" y="94" width="2" height="2" fill="#c9c9c9"/>
<rect x="1619" y="100" width="2" height="2" fill="#c9c9c9"/>
<rect x="1625" y="100" width="2" height="2" fill="#c9c9c9"/>
<rect x="1619" y="106" width="2" height="2" fill="#c9c9c9"/>
<rect x="1625" y="106" width="2" height="2" fill="#c9c9c9"/>
<rect x="1642" y="68" width="48" height="47" rx="9" fill="#1a5cb0"/>
<rect x="1642" y="68" width="48" height="24" rx="9" fill="#2a74c8" opacity="0.6"/>
<path d="M1662 78 L1682 78 L1682 84 L1671 84 L1671 89 L1680 89 L1680 95 L1671 95 L1671 100 L1683 100 L1683 106 L1662 106 Z" fill="#5fd0e0" stroke="#3aa0b8" stroke-width="1"/>
<path d="M1651 83 L1657 83 Q1657 77 1661 77 Q1665 77 1665 83 L1669 83 L1669 88 Q1674 88 1674 92 Q1674 96 1669 96 L1669 103 L1651 103 Z" fill="#dfe3e8" stroke="#9aa" stroke-width="1"/>
<path d="M1708 86.5 L1713 92.0 L1708 97.5 M1717 86.5 L1722 92.0 L1717 97.5" stroke="#333" stroke-width="2.2" fill="none"/>
<rect x="9" y="153" width="2" height="2" fill="#c9c9c9"/>
<rect x="15" y="153" width="2" height="2" fill="#c9c9c9"/>
<rect x="9" y="159" width="2" height="2" fill="#c9c9c9"/>
<rect x="15" y="159" width="2" height="2" fill="#c9c9c9"/>
<rect x="9" y="165" width="2" height="2" fill="#c9c9c9"/>
<rect x="15" y="165" width="2" height="2" fill="#c9c9c9"/>
<rect x="9" y="171" width="2" height="2" fill="#c9c9c9"/>
<rect x="15" y="171" width="2" height="2" fill="#c9c9c9"/>
<rect x="9" y="177" width="2" height="2" fill="#c9c9c9"/>
<rect x="15" y="177" width="2" height="2" fill="#c9c9c9"/>
<rect x="9" y="183" width="2" height="2" fill="#c9c9c9"/>
<rect x="15" y="183" width="2" height="2" fill="#c9c9c9"/>
<circle cx="62" cy="163" r="7.2" fill="#e0141e"/>
<ellipse cx="61" cy="160" rx="4" ry="2.2" fill="#ff6a6a" opacity="0.7"/>
<rect x="59" y="155" width="5" height="2" fill="#5050a0"/>
<circle cx="52" cy="179" r="7.2" fill="#e0141e"/>
<ellipse cx="51" cy="176" rx="4" ry="2.2" fill="#ff6a6a" opacity="0.7"/>
<rect x="49" y="171" width="5" height="2" fill="#5050a0"/>
<circle cx="72" cy="179" r="7.2" fill="#e0141e"/>
<ellipse cx="71" cy="176" rx="4" ry="2.2" fill="#ff6a6a" opacity="0.7"/>
<rect x="69" y="171" width="5" height="2" fill="#5050a0"/>
<path d="M70 155 L80 155 M75 150 L75 160" stroke="#000" stroke-width="2.2"/>
<path d="M121 167 L145 167" stroke="#d04040" stroke-width="2" stroke-dasharray="3 3"/>
<rect x="113.5" y="162.5" width="9" height="9" fill="#2c6fe6" stroke="#1848b0" stroke-width="1"/>
<rect x="116.5" y="165.5" width="3" height="3" fill="#cfe0ff"/>
<rect x="143.5" y="162.5" width="9" height="9" fill="#2c6fe6" stroke="#1848b0" stroke-width="1"/>
<rect x="146.5" y="165.5" width="3" height="3" fill="#cfe0ff"/>
<rect x="114" y="174" width="38" height="11" fill="#f4b23a"/>
<rect x="114" y="184" width="38" height="2" fill="#777"/>
<path d="M118 174 L118 181 M122 174 L122 178 M126 174 L126 181 M131 174 L131 178 M135 174 L135 181 M139 174 L139 178 M143 174 L143 181 M147 174 L147 178" stroke="#7a5a20" stroke-width="1.3"/>
<path d="M144 153 L154 153 M149 148 L149 158" stroke="#000" stroke-width="2.2"/>
<path d="M193 175 L218 162 M193 175 L218 186" stroke="#444" stroke-width="2"/>
<path d="M217 165 L217 183" stroke="#e03030" stroke-width="2" stroke-dasharray="3 2"/>
<rect x="189.0" y="171.0" width="8" height="8" fill="#2c6fe6" stroke="#1848b0" stroke-width="1"/>
<rect x="191.5" y="173.5" width="3" height="3" fill="#cfe0ff"/>
<rect x="214.0" y="158.0" width="8" height="8" fill="#2c6fe6" stroke="#1848b0" stroke-width="1"/>
<rect x="216.5" y="160.5" width="3" height="3" fill="#cfe0ff"/>
<rect x="214.0" y="182.0" width="8" height="8" fill="#2c6fe6" stroke="#1848b0" stroke-width="1"/>
<rect x="216.5" y="184.5" width="3" height="3" fill="#cfe0ff"/>
<path d="M220 151 L230 151 M225 146 L225 156" stroke="#000" stroke-width="2.2"/>
<path d="M286 157 C278 150 262 152 264 165 C266 174 292 166 295 175 C298 186 284 190 277 183" stroke="#8a8a8a" stroke-width="3" fill="none"/>
<rect x="280.0" y="153.0" width="8" height="8" fill="#2c6fe6" stroke="#1848b0" stroke-width="1"/>
<rect x="282.5" y="155.5" width="3" height="3" fill="#cfe0ff"/>
<rect x="263.0" y="164.0" width="8" height="8" fill="#2c6fe6" stroke="#1848b0" stroke-width="1"/>
<rect x="265.5" y="166.5" width="3" height="3" fill="#cfe0ff"/>
<rect x="291.0" y="168.0" width="8" height="8" fill="#2c6fe6" stroke="#1848b0" stroke-width="1"/>
<rect x="293.5" y="170.5" width="3" height="3" fill="#cfe0ff"/>
<rect x="273.0" y="179.0" width="8" height="8" fill="#2c6fe6" stroke="#1848b0" stroke-width="1"/>
<rect x="275.5" y="181.5" width="3" height="3" fill="#cfe0ff"/>
<path d="M292 153 L302 153 M297 148 L297 158" stroke="#000" stroke-width="2.2"/>
<ellipse cx="356" cy="170" rx="19" ry="12" transform="rotate(22 356 170)" fill="#e8e8e8" stroke="#111" stroke-width="2.5"/>
<rect x="349.0" y="153.0" width="8" height="8" fill="#2c6fe6" stroke="#1848b0" stroke-width="1"/>
<rect x="351.5" y="155.5" width="3" height="3" fill="#cfe0ff"/>
<rect x="365.0" y="161.0" width="8" height="8" fill="#2c6fe6" stroke="#1848b0" stroke-width="1"/>
<rect x="367.5" y="163.5" width="3" height="3" fill="#cfe0ff"/>
<rect x="338.0" y="171.0" width="8" height="8" fill="#2c6fe6" stroke="#1848b0" stroke-width="1"/>
<rect x="340.5" y="173.5" width="3" height="3" fill="#cfe0ff"/>
<rect x="355.0" y="180.0" width="8" height="8" fill="#2c6fe6" stroke="#1848b0" stroke-width="1"/>
<rect x="357.5" y="182.5" width="3" height="3" fill="#cfe0ff"/>
<path d="M366 153 L376 153 M371 148 L371 158" stroke="#000" stroke-width="2.2"/>
<path d="M427 157 L446 172 L435 187 L414 172 Z" fill="#6e6e6e" stroke="#000" stroke-width="2.5" stroke-linejoin="round"/>
<path d="M440 153 L450 153 M445 148 L445 158" stroke="#000" stroke-width="2.2"/>
<g stroke="#7a9ad8" stroke-width="1.5" fill="#eef2fb"><path d="M491 166 L497 160 L519 160 L519 183 L513 189 L491 189 Z"/><path d="M491 166 L513 166 L513 189 M513 166 L519 160" fill="none"/></g>
<rect x="499.5" y="169.5" width="3" height="3" fill="#e05050"/>
<rect x="506.5" y="176.5" width="3" height="3" fill="#e05050"/>
<rect x="492.5" y="175.5" width="3" height="3" fill="#e05050"/>
<rect x="502.5" y="161.5" width="3" height="3" fill="#e05050"/>
<path d="M514 155 L524 155 M519 150 L519 160" stroke="#000" stroke-width="2.2"/>
<path d="M841 167 L857 167 L849.0 175 Z" fill="#555"/>
<rect x="886.5" y="158" width="23" height="23" fill="#555" stroke="#999" stroke-width="1.2"/>
<path d="M962 148 L971 161 L966 161 L966 176 L958 176 L958 161 L953 161 Z" fill="#8e8e8e"/>
<circle cx="962" cy="180" r="6" fill="#8f8f8f"/>
<path d="M997 167 L1011 167 L1004.0 175 Z" fill="#444"/>
<g stroke="#555" stroke-width="1.6" fill="#e9e9e9"><path d="M1042 160 L1066 160 L1064 186 L1044 186 Z"/><rect x="1040" y="156" width="28" height="4"/><rect x="1050" y="152" width="8" height="4"/></g>
<path d="M1048 163 L1048 183 M1054 163 L1054 183 M1060 163 L1060 183" stroke="#777" stroke-width="1.5"/>
<path d="M1091 167 L1105 167 L1098.0 175 Z" fill="#444"/>
<circle cx="1138" cy="168.5" r="2.2" fill="#bbb" stroke="#777" stroke-width="1"/>
<circle cx="1147" cy="168.5" r="2.2" fill="#bbb" stroke="#777" stroke-width="1"/>
<circle cx="1156" cy="168.5" r="2.2" fill="#bbb" stroke="#777" stroke-width="1"/>
<path d="M1164 189 L1176 189 L1170.0 195 Z" fill="#444"/>
<path d="M1224.5 158 L1229.5 158 M1235.5 158 L1240.5 158 M1232.5 150 L1232.5 155 M1232.5 161 L1232.5 166 M1226.5 152 L1230.5 156 M1234.5 160 L1238.5 164 M1226.5 164 L1230.5 160 M1234.5 156 L1238.5 152" stroke="#e01818" stroke-width="1.8"/>
<path d="M1215 176.5 L1220 176.5 M1226 176.5 L1231 176.5 M1223 168.5 L1223 173.5 M1223 179.5 L1223 184.5 M1217 170.5 L1221 174.5 M1225 178.5 L1229 182.5 M1217 182.5 L1221 178.5 M1225 174.5 L1229 170.5" stroke="#e01818" stroke-width="1.8"/>
<path d="M1234.5 176.5 L1239.5 176.5 M1245.5 176.5 L1250.5 176.5 M1242.5 168.5 L1242.5 173.5 M1242.5 179.5 L1242.5 184.5 M1236.5 170.5 L1240.5 174.5 M1244.5 178.5 L1248.5 182.5 M1236.5 182.5 L1240.5 178.5 M1244.5 174.5 L1248.5 170.5" stroke="#e01818" stroke-width="1.8"/>
<rect x="1288" y="151" width="37" height="37" fill="#dde3e8" stroke="#111" stroke-width="2"/>
<path d="M1300 151 L1300 188 M1313 151 L1313 188 M1288 163 L1325 163 M1288 176 L1325 176" stroke="#9aa" stroke-width="1"/>
<path d="M1291 178 L1296 186 L1301 178 L1306 186 L1311 178 L1316 186 L1321 178" stroke="#1a6a9a" stroke-width="2" fill="none"/>
<path d="M1296 177 L1323 151 L1328 156 L1301 182 Z" fill="#f0c020" stroke="#333" stroke-width="1.2"/>
<path d="M1323 151 L1326 148 L1331 153 L1328 156 Z" fill="#e06060"/>
<g><circle cx="34" cy="247" r="26.5" fill="#b3bddb" stroke="#1a1a1a" stroke-width="1.6"/><path d="M40 273 A26.5 26.5 0 0 0 60.5 250 L58 252 Q50 262 36 266 Z" fill="#8e97b4" opacity="0.7"/><path d="M24 222 L31 220.5 L31 255 L60.5 246 L60.5 251 Q45 262 24 262 Z" fill="#5c6378" stroke="#1a1a1a" stroke-width="1.2"/><path d="M27 223 L29 222.5 L29 257 L27 258 Z" fill="#a9b0c4"/><path d="M31 255 L60.5 246 L60.5 249 Q46 258 31 259 Z" fill="#fafafa" stroke="#333" stroke-width="0.8"/><path d="M31 221 L60.5 246 L31 255 Z" fill="#dde2ee"/><rect x="35.5" y="221" width="8.5" height="8.5" fill="#f5c400" stroke="#111" stroke-width="1"/><rect x="35.5" y="229.5" width="8.5" height="8.5" fill="#17985a" stroke="#111" stroke-width="1"/><rect x="44" y="229.5" width="8.5" height="8.5" fill="#f26a1e" stroke="#111" stroke-width="1"/><rect x="35.5" y="238" width="8.5" height="8" fill="#e3201c" stroke="#111" stroke-width="1"/><rect x="44" y="238" width="8.5" height="8" fill="#d2561e" stroke="#111" stroke-width="1"/><rect x="52.5" y="238" width="8" height="8" fill="#1f5ec8" stroke="#111" stroke-width="1"/></g>
<path d="M18 305.5 L26 312.5 L18 319.5 Z" fill="#555"/>
<path d="M26 405 L35 413" stroke="#e0a040" stroke-width="4.5" stroke-linecap="round"/>
<path d="M22 401 L26 405" stroke="#aaa" stroke-width="3"/>
<circle cx="16" cy="395" r="9" fill="#dff0f8" stroke="#a8b8c0" stroke-width="1.5"/>
<path d="M8 396 Q16 391 24 396 Q23 403 16 404 Q9 403 8 396 Z" fill="#a8d8ea"/>
<circle cx="852" cy="400" r="9.5" fill="#fff" stroke="#555" stroke-width="1.5"/>
<path d="M835.5 401 L842 401 M862 401 L869 401" stroke="#444" stroke-width="2"/>
<path d="M842 405 Q852 414 862 405" stroke="#222" stroke-width="3" fill="none"/>
<path d="M845 409 L842 414 M852 411 L852 416 M859 409 L862 414" stroke="#444" stroke-width="2"/>
<ellipse cx="929" cy="399" rx="12" ry="9" fill="#e4e4e4" stroke="#888" stroke-width="1.2"/>
<circle cx="929" cy="400" r="7.5" fill="#2a2a2a"/><circle cx="926" cy="397" r="2.2" fill="#9a9a9a"/>
<path d="M915 397 Q929 385 943 397" stroke="#111" stroke-width="3.2" fill="none"/>
<path d="M929 389 L929 383 M921 390 L919 385 M937 390 L939 385 M912 398 L918 398 M940 398 L945 397" stroke="#222" stroke-width="2"/>
<ellipse cx="889" cy="459" rx="4" ry="2.8" fill="#222"/><path d="M884 457 Q889 452 894 457" stroke="#222" stroke-width="1" fill="none"/>
<path d="M898 455 L898 463" stroke="#999" stroke-width="1"/>
<ellipse cx="906" cy="460" rx="4" ry="3" fill="#fff" stroke="#444" stroke-width="1"/>
<rect x="932" y="448" width="20" height="20" fill="#111"/>
<rect x="933.5" y="449.5" width="3.3" height="3.3" fill="#e0101a"/>
<rect x="938.0" y="449.5" width="3.3" height="3.3" fill="#80d050"/>
<rect x="942.5" y="449.5" width="3.3" height="3.3" fill="#70c8e8"/>
<rect x="947.0" y="449.5" width="3.3" height="3.3" fill="#f8f090"/>
<rect x="933.5" y="454.0" width="3.3" height="3.3" fill="#b040c0"/>
<rect x="938.0" y="454.0" width="3.3" height="3.3" fill="#7080d0"/>
<rect x="942.5" y="454.0" width="3.3" height="3.3" fill="#50d0e0"/>
<rect x="947.0" y="454.0" width="3.3" height="3.3" fill="#f0e050"/>
<rect x="933.5" y="458.5" width="3.3" height="3.3" fill="#803090"/>
<rect x="938.0" y="458.5" width="3.3" height="3.3" fill="#307090"/>
<rect x="942.5" y="458.5" width="3.3" height="3.3" fill="#40c090"/>
<rect x="947.0" y="458.5" width="3.3" height="3.3" fill="#f08040"/>
<rect x="933.5" y="463.0" width="3.3" height="3.3" fill="#502080"/>
<rect x="938.0" y="463.0" width="3.3" height="3.3" fill="#3070e0"/>
<rect x="942.5" y="463.0" width="3.3" height="3.3" fill="#10a020"/>
<rect x="947.0" y="463.0" width="3.3" height="3.3" fill="#e03050"/>
<rect x="472" y="560" width="2" height="2" fill="#b8b8b8"/>
<rect x="478" y="560" width="2" height="2" fill="#b8b8b8"/>
<rect x="484" y="560" width="2" height="2" fill="#b8b8b8"/>
<rect x="490" y="560" width="2" height="2" fill="#b8b8b8"/>
<rect x="496" y="560" width="2" height="2" fill="#b8b8b8"/>
<rect x="502" y="560" width="2" height="2" fill="#b8b8b8"/>
<path d="M18 587.5 L26 594.5 L18 601.5 Z" fill="#555"/>
<path d="M14.5 672.5 L29.5 672.5 L22.0 680.5 Z" fill="#444"/>
<path d="M14.5 721 L29.5 721 L22.0 729 Z" fill="#666"/>
<path d="M974 304 L990 304 L982 296 Z" fill="#555"/>
<path d="M974 756 L990 756 L982.0 764 Z" fill="#555"/>
<path d="M14.5 798.5 L29.5 798.5 L22.0 806.5 Z" fill="#444"/>
<rect x="1002" y="652" width="2" height="2" fill="#bdbdbd"/>
<rect x="1002" y="658" width="2" height="2" fill="#bdbdbd"/>
<rect x="1002" y="664" width="2" height="2" fill="#bdbdbd"/>
<rect x="1002" y="670" width="2" height="2" fill="#bdbdbd"/>
<rect x="1002" y="676" width="2" height="2" fill="#bdbdbd"/>
<rect x="1002" y="682" width="2" height="2" fill="#bdbdbd"/>
<path d="M1014 225 L1023 225" stroke="#444" stroke-width="1.2"/>
<path d="M1023 221 Q1025 225 1023 229 L1025 228 L1030 227 L1031 229 Q1033 225 1031 221 L1030 223 L1025 222 Z" fill="#333" stroke="#222" stroke-width="0.8"/>
<rect x="1086" y="216" width="18" height="18" fill="#a03020" stroke="#222" stroke-width="1"/>
<rect x="1087.5" y="217.5" width="3" height="3" fill="#fff" opacity="0.9"/>
<rect x="1091.7" y="217.5" width="3" height="3" fill="#fff" opacity="0.9"/>
<rect x="1095.9" y="217.5" width="3" height="3" fill="#000" opacity="0.25"/>
<rect x="1100.1" y="217.5" width="3" height="3" fill="#000" opacity="0.25"/>
<rect x="1087.5" y="221.7" width="3" height="3" fill="#fff" opacity="0.9"/>
<rect x="1091.7" y="221.7" width="3" height="3" fill="#fff" opacity="0.9"/>
<rect x="1095.9" y="221.7" width="3" height="3" fill="#000" opacity="0.25"/>
<rect x="1100.1" y="221.7" width="3" height="3" fill="#000" opacity="0.25"/>
<rect x="1087.5" y="225.9" width="3" height="3" fill="#000" opacity="0.25"/>
<rect x="1091.7" y="225.9" width="3" height="3" fill="#000" opacity="0.25"/>
<rect x="1095.9" y="225.9" width="3" height="3" fill="#000" opacity="0.25"/>
<rect x="1100.1" y="225.9" width="3" height="3" fill="#000" opacity="0.25"/>
<rect x="1087.5" y="230.1" width="3" height="3" fill="#000" opacity="0.25"/>
<rect x="1091.7" y="230.1" width="3" height="3" fill="#000" opacity="0.25"/>
<rect x="1095.9" y="230.1" width="3" height="3" fill="#000" opacity="0.25"/>
<rect x="1100.1" y="230.1" width="3" height="3" fill="#000" opacity="0.25"/>
<path d="M1082 225 L1085 225 M1105 225 L1108 225 M1095 213 L1095 216 M1095 234 L1095 237" stroke="#111" stroke-width="2"/>
<rect x="1120" y="216" width="18" height="18" fill="none" stroke="#000" stroke-width="2"/>
<rect x="1119" y="215" width="20" height="4.5" fill="#000"/>
<rect x="1160" y="220" width="7" height="10" rx="2" fill="#5aa0e8" stroke="#111" stroke-width="1.5"/>
<rect x="1181" y="220" width="7" height="10" rx="2" fill="#bcd" stroke="#111" stroke-width="1.5"/>
<rect x="1165" y="213" width="18" height="24" rx="6" fill="#fafafa" stroke="#000" stroke-width="2.6"/>
<path d="M1376 225 L1385 225" stroke="#444" stroke-width="1.2"/>
<path d="M1385 221 Q1387 225 1385 229 L1387 228 L1392 227 L1393 229 Q1395 225 1393 221 L1392 223 L1387 222 Z" fill="#333" stroke="#222" stroke-width="0.8"/>
<rect x="1449" y="217" width="17" height="17" fill="none" stroke="#000" stroke-width="2.2"/>
<rect x="1453" y="221" width="9" height="9" fill="none" stroke="#000" stroke-width="1.6"/>
<path d="M1457 212 L1457 217 M1457 234 L1457 240 M1444 225.5 L1449 225.5 M1466 225.5 L1471 225.5" stroke="#000" stroke-width="2"/>
<rect x="1482" y="217" width="18" height="18" fill="none" stroke="#000" stroke-width="2"/>
<rect x="1481" y="216" width="20" height="4.5" fill="#000"/>
<path d="M1014 683 L1023 683" stroke="#444" stroke-width="1.2"/>
<path d="M1023 679 Q1025 683 1023 687 L1025 686 L1030 685 L1031 687 Q1033 683 1031 679 L1030 681 L1025 680 Z" fill="#333" stroke="#222" stroke-width="0.8"/>
<rect x="1086" y="674" width="18" height="18" fill="#3a6a2a" stroke="#222" stroke-width="1"/>
<rect x="1087.5" y="675.5" width="3" height="3" fill="#fff" opacity="0.9"/>
<rect x="1091.7" y="675.5" width="3" height="3" fill="#fff" opacity="0.9"/>
<rect x="1095.9" y="675.5" width="3" height="3" fill="#000" opacity="0.25"/>
<rect x="1100.1" y="675.5" width="3" height="3" fill="#000" opacity="0.25"/>
<rect x="1087.5" y="679.7" width="3" height="3" fill="#fff" opacity="0.9"/>
<rect x="1091.7" y="679.7" width="3" height="3" fill="#fff" opacity="0.9"/>
<rect x="1095.9" y="679.7" width="3" height="3" fill="#000" opacity="0.25"/>
<rect x="1100.1" y="679.7" width="3" height="3" fill="#000" opacity="0.25"/>
<rect x="1087.5" y="683.9" width="3" height="3" fill="#000" opacity="0.25"/>
<rect x="1091.7" y="683.9" width="3" height="3" fill="#000" opacity="0.25"/>
<rect x="1095.9" y="683.9" width="3" height="3" fill="#000" opacity="0.25"/>
<rect x="1100.1" y="683.9" width="3" height="3" fill="#000" opacity="0.25"/>
<rect x="1087.5" y="688.1" width="3" height="3" fill="#000" opacity="0.25"/>
<rect x="1091.7" y="688.1" width="3" height="3" fill="#000" opacity="0.25"/>
<rect x="1095.9" y="688.1" width="3" height="3" fill="#000" opacity="0.25"/>
<rect x="1100.1" y="688.1" width="3" height="3" fill="#000" opacity="0.25"/>
<path d="M1082 683 L1085 683 M1105 683 L1108 683 M1095 671 L1095 674 M1095 692 L1095 695" stroke="#111" stroke-width="2"/>
<rect x="1120" y="674" width="18" height="18" fill="none" stroke="#000" stroke-width="2"/>
<rect x="1119" y="673" width="20" height="4.5" fill="#000"/>
<rect x="1161" y="671" width="18" height="24" rx="6" fill="#fafafa" stroke="#000" stroke-width="2.6"/>
<path d="M1376 683 L1385 683" stroke="#444" stroke-width="1.2"/>
<path d="M1385 679 Q1387 683 1385 687 L1387 686 L1392 685 L1393 687 Q1395 683 1393 679 L1392 681 L1387 680 Z" fill="#333" stroke="#222" stroke-width="0.8"/>
<rect x="1448" y="674" width="18" height="18" fill="#7a6a20" stroke="#222" stroke-width="1"/>
<rect x="1449.5" y="675.5" width="3" height="3" fill="#fff" opacity="0.9"/>
<rect x="1453.7" y="675.5" width="3" height="3" fill="#fff" opacity="0.9"/>
<rect x="1457.9" y="675.5" width="3" height="3" fill="#000" opacity="0.25"/>
<rect x="1462.1" y="675.5" width="3" height="3" fill="#000" opacity="0.25"/>
<rect x="1449.5" y="679.7" width="3" height="3" fill="#fff" opacity="0.9"/>
<rect x="1453.7" y="679.7" width="3" height="3" fill="#fff" opacity="0.9"/>
<rect x="1457.9" y="679.7" width="3" height="3" fill="#000" opacity="0.25"/>
<rect x="1462.1" y="679.7" width="3" height="3" fill="#000" opacity="0.25"/>
<rect x="1449.5" y="683.9" width="3" height="3" fill="#000" opacity="0.25"/>
<rect x="1453.7" y="683.9" width="3" height="3" fill="#000" opacity="0.25"/>
<rect x="1457.9" y="683.9" width="3" height="3" fill="#000" opacity="0.25"/>
<rect x="1462.1" y="683.9" width="3" height="3" fill="#000" opacity="0.25"/>
<rect x="1449.5" y="688.1" width="3" height="3" fill="#000" opacity="0.25"/>
<rect x="1453.7" y="688.1" width="3" height="3" fill="#000" opacity="0.25"/>
<rect x="1457.9" y="688.1" width="3" height="3" fill="#000" opacity="0.25"/>
<rect x="1462.1" y="688.1" width="3" height="3" fill="#000" opacity="0.25"/>
<path d="M1444 683 L1447 683 M1467 683 L1470 683 M1457 671 L1457 674 M1457 692 L1457 695" stroke="#111" stroke-width="2"/>
<rect x="1482" y="674" width="18" height="18" fill="none" stroke="#000" stroke-width="2"/>
<rect x="1481" y="673" width="20" height="4.5" fill="#000"/>
<rect x="1523" y="671" width="18" height="24" rx="6" fill="#fafafa" stroke="#000" stroke-width="2.6"/>
<circle cx="1659" cy="1160" r="22" fill="#aaa" opacity="0.7"/>
<circle cx="1657" cy="1158" r="22" fill="#959595"/>
<path d="M1648 1149 L1666 1167 M1666 1149 L1648 1167" stroke="#fff" stroke-width="5"/>
<rect x="1717" y="1185" width="2" height="2" fill="#bbb"/>
<rect x="1712" y="1190" width="2" height="2" fill="#bbb"/>
<rect x="1722" y="1180" width="2" height="2" fill="#bbb"/>
<rect x="1717" y="1190" width="2" height="2" fill="#bbb"/>
<rect x="1722" y="1185" width="2" height="2" fill="#bbb"/>
<rect x="1722" y="1190" width="2" height="2" fill="#bbb"/>
<rect x="1707" y="1190" width="2" height="2" fill="#bbb"/>
</svg>
</body></html>
